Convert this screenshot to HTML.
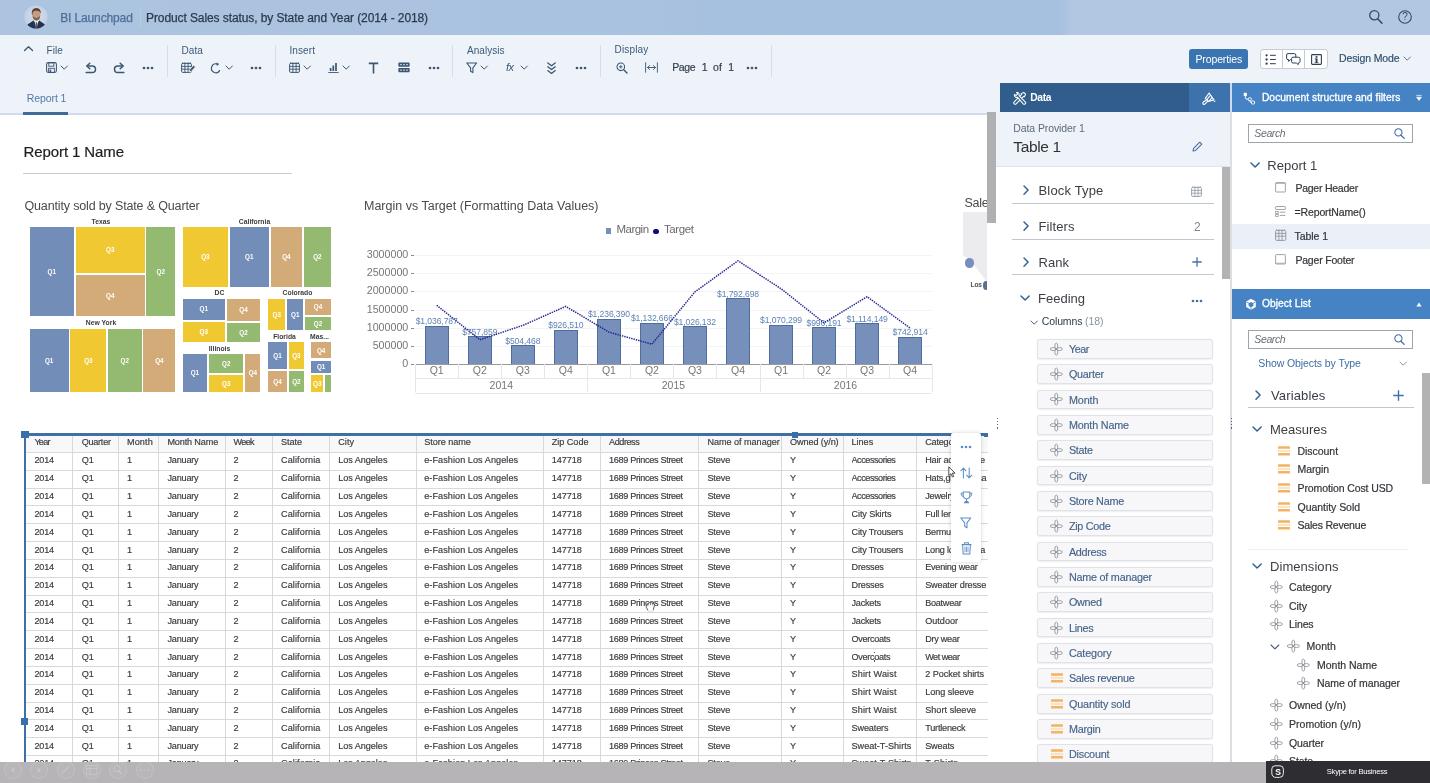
<!DOCTYPE html><html><head><meta charset="utf-8"><title>Product Sales status</title><style>
*{box-sizing:border-box;margin:0;padding:0}
html,body{width:1430px;height:783px;overflow:hidden;background:#fff}
body{font-family:"Liberation Sans",sans-serif;position:relative;color:#32363a}
.a{position:absolute}
.t{position:absolute;white-space:nowrap;line-height:1}
svg{position:absolute;overflow:visible}
</style></head><body><div id="root" style="position:absolute;left:0;top:0;width:1430px;height:783px;overflow:hidden;will-change:transform">
<div class="a" style="left:0px;top:0px;width:1430px;height:34.5px;background:linear-gradient(90deg,#adc4e0 0%,#a9c2df 45%,#a6c0df 50%,#a6c0df 74%,#b2c7e2 75%,#b2c7e2 100%);"></div>
<div class="a" style="left:0px;top:34.5px;width:1430px;height:79px;background:#eef2f9;"></div>
<div class="a" style="left:0px;top:113px;width:998px;height:1.7px;background:#d0dcec;"></div>
<div class="a" style="left:0px;top:114.6px;width:998px;height:648px;background:#fff;"></div>
<svg style="left:23.8px;top:5px" width="24" height="24" viewBox="0 0 24 24">
<defs><clipPath id="av"><circle cx="12" cy="12" r="11.6"/></clipPath>
<radialGradient id="avg" cx="0.5" cy="0.45" r="0.6"><stop offset="0" stop-color="#d6e0ee"/><stop offset="1" stop-color="#bccde4"/></radialGradient></defs>
<circle cx="12" cy="12" r="11.6" fill="url(#avg)"/>
<g clip-path="url(#av)">
<path d="M8.2 9.2 Q7.4 3.4 12.4 3.3 Q17 3.4 16.4 9.4 Q16.2 14.8 12.4 15.4 Q8.6 14.8 8.2 9.2Z" fill="#c99a82"/>
<path d="M7.9 9.4 Q7 3 12.4 2.9 Q17.2 3 16.7 8.6 Q15.8 5.6 13.2 5.9 Q10 5.4 8.9 7.2 Q8.4 8.2 8.4 10.2Z" fill="#5b4434"/>
<path d="M8.7 10.6 Q9.2 12.6 12.4 12.9 Q15.6 12.6 16.1 10.6 Q16.3 15 12.4 15.6 Q8.5 15 8.7 10.6Z" fill="#80604e"/>
<path d="M10.8 11.7 Q12.4 12.6 14 11.7 Q12.4 12.2 10.8 11.7Z" fill="#e8d8d0"/>
<path d="M2.4 24 Q2.2 19.6 5 18.4 L9.6 15.4 L12.4 19 L15.2 15.4 L19.6 18.4 Q22 19.6 21.8 24Z" fill="#26324c"/>
<path d="M10.2 15.2 L12.4 24 L14.6 15.2 L12.4 16.6Z" fill="#e6e9ef"/>
<path d="M11.8 17.2 H13 L13.5 24 H11.3Z" fill="#4a5872"/>
</g></svg>
<div class="t" style="left:60.2px;top:11.50px;font-size:12px;height:12px;color:#4d6f99;letter-spacing:-0.130px;-webkit-text-stroke:0.25px #4d6f99;">BI Launchpad</div>
<div class="a" style="left:139.5px;top:9px;width:1px;height:17px;background:#b9cce3;"></div>
<div class="t" style="left:146px;top:11.50px;font-size:12px;height:12px;color:#2b3b4e;letter-spacing:-0.091px;-webkit-text-stroke:0.25px #2b3b4e;">Product Sales status, by State and Year (2014 - 2018)</div>
<svg style="left:1368px;top:9px;" width="16" height="16" viewBox="0 0 16 16"><circle cx="6.3" cy="6.3" r="4.6" fill="none" stroke="#2f4d6e" stroke-width="1.3"/><path d="M9.6 9.8 L14 14.2" stroke="#2f4d6e" stroke-width="1.6" stroke-linecap="round"/></svg>
<svg style="left:1398px;top:9.7px;" width="14" height="14" viewBox="0 0 14 14"><circle cx="7" cy="7" r="6.3" fill="none" stroke="#2f4d6e" stroke-width="1.1"/></svg>
<div class="t" style="left:1402.2px;top:12.00px;font-size:10px;height:10px;color:#2f4d6e;font-weight:400">?</div>
<svg style="left:23.5px;top:45.8px;" width="9" height="5" viewBox="0 0 9 5"><path d="M0.5 4.5 L4.5 0.7 L8.5 4.5" fill="none" stroke="#3b5672" stroke-width="1.3" stroke-linecap="round" stroke-linejoin="round"/></svg>
<div class="t" style="left:46.5px;top:45.80px;font-size:10px;height:10px;color:#3d5a7a;letter-spacing:0.097px;">File</div>
<svg style="left:46px;top:62px;" width="11" height="11" viewBox="0 0 11 11"><rect x="0.6" y="0.6" width="9.8" height="9.8" rx="1.6" fill="none" stroke="#3b5672" stroke-width="1.05"/><rect x="2.8" y="0.8" width="5" height="3.4" fill="none" stroke="#3b5672" stroke-width="0.9"/><rect x="2.6" y="6.3" width="5.8" height="4" fill="none" stroke="#3b5672" stroke-width="0.9"/><rect x="3.6" y="7.6" width="1.6" height="2.6" fill="#3b5672"/></svg>
<svg style="left:61.39999999999999px;top:66.4px;" width="6.4" height="3.2" viewBox="0 0 6.4 3.2"><path d="M0 0 L3.2 3.2 L6.4 0" fill="none" stroke="#3b5672" stroke-width="1.0" stroke-linecap="round" stroke-linejoin="round"/></svg>
<svg style="left:85px;top:62px;" width="12" height="12" viewBox="0 0 12 12"><path d="M1.2 10.6 H7.2 A3.3 3.3 0 0 0 7.2 4 H2.2" fill="none" stroke="#3b5672" stroke-width="1.5" stroke-linecap="round"/><path d="M4.8 1.2 L1.8 4 L4.8 6.8" fill="none" stroke="#3b5672" stroke-width="1.5" stroke-linecap="round" stroke-linejoin="round"/></svg>
<svg style="left:113px;top:62px;" width="12" height="12" viewBox="0 0 12 12"><path d="M10.8 10.6 H4.8 A3.3 3.3 0 0 1 4.8 4 H9.8" fill="none" stroke="#3b5672" stroke-width="1.5" stroke-linecap="round"/><path d="M7.2 1.2 L10.2 4 L7.2 6.8" fill="none" stroke="#3b5672" stroke-width="1.5" stroke-linecap="round" stroke-linejoin="round"/></svg>
<svg style="left:142.3px;top:66px;" width="12" height="4" viewBox="0 0 12 4"><circle cx="2" cy="2" r="1.35" fill="#3b5672"/><circle cx="6" cy="2" r="1.35" fill="#3b5672"/><circle cx="10" cy="2" r="1.35" fill="#3b5672"/></svg>
<div class="a" style="left:167px;top:45px;width:1px;height:32px;background:#d6deea;"></div>
<div class="t" style="left:181.5px;top:45.80px;font-size:10px;height:10px;color:#3d5a7a;letter-spacing:0.095px;">Data</div>
<svg style="left:180.5px;top:62px;" width="11" height="11" viewBox="0 0 11 11"><rect x="0.6" y="1.4" width="9.8" height="9" rx="1.2" fill="none" stroke="#3b5672" stroke-width="1"/><path d="M0.6 4.4 H10.4 M0.6 7.2 H10.4 M3.9 1.4 V10.4 M7.1 1.4 V10.4 M3.9 0.3 V1.4 M7.1 0.3 V1.4 M1.6 0.3 V1.4 M9.4 0.3 V1.4" stroke="#3b5672" stroke-width="0.9" fill="none"/></svg>
<svg style="left:187.5px;top:64px;" width="8" height="9" viewBox="0 0 8 9"><path d="M1 8 L1.8 5.4 L5.6 1.2 L7.4 2.9 L3.6 7.2 Z" fill="#3b5672" stroke="#eef2f9" stroke-width="0.8"/></svg>
<svg style="left:210px;top:62px;" width="12" height="12" viewBox="0 0 12 12"><path d="M9.6 8.6 A4.4 4.4 0 1 1 7.3 2.1" fill="none" stroke="#3b5672" stroke-width="1.2" stroke-linecap="round"/><path d="M6.4 0.4 L9.2 1.9 L6.9 4.1Z" fill="#3b5672"/></svg>
<svg style="left:226.10000000000002px;top:66.4px;" width="6.4" height="3.2" viewBox="0 0 6.4 3.2"><path d="M0 0 L3.2 3.2 L6.4 0" fill="none" stroke="#3b5672" stroke-width="1.0" stroke-linecap="round" stroke-linejoin="round"/></svg>
<svg style="left:250.3px;top:66px;" width="12" height="4" viewBox="0 0 12 4"><circle cx="2" cy="2" r="1.35" fill="#3b5672"/><circle cx="6" cy="2" r="1.35" fill="#3b5672"/><circle cx="10" cy="2" r="1.35" fill="#3b5672"/></svg>
<div class="a" style="left:274.5px;top:45px;width:1px;height:32px;background:#d6deea;"></div>
<div class="t" style="left:289.5px;top:45.80px;font-size:10px;height:10px;color:#3d5a7a;letter-spacing:0.082px;">Insert</div>
<svg style="left:289px;top:62px;" width="11" height="11" viewBox="0 0 11 11"><rect x="0.6" y="1.4" width="9.8" height="9" rx="1.2" fill="none" stroke="#3b5672" stroke-width="1"/><path d="M0.6 4.4 H10.4 M0.6 7.2 H10.4 M3.9 1.4 V10.4 M7.1 1.4 V10.4 M3.9 0.3 V1.4 M7.1 0.3 V1.4 M1.6 0.3 V1.4 M9.4 0.3 V1.4" stroke="#3b5672" stroke-width="0.9" fill="none"/></svg>
<svg style="left:304.1px;top:66.4px;" width="6.4" height="3.2" viewBox="0 0 6.4 3.2"><path d="M0 0 L3.2 3.2 L6.4 0" fill="none" stroke="#3b5672" stroke-width="1.0" stroke-linecap="round" stroke-linejoin="round"/></svg>
<svg style="left:328px;top:62px;" width="11" height="11" viewBox="0 0 11 11"><path d="M2.6 9 V6 M5.3 9 V3.4 M8 9 V1" stroke="#3b5672" stroke-width="1.7" fill="none"/><path d="M0.3 10.5 H10.6" stroke="#3b5672" stroke-width="0.9"/></svg>
<svg style="left:343.1px;top:66.4px;" width="6.4" height="3.2" viewBox="0 0 6.4 3.2"><path d="M0 0 L3.2 3.2 L6.4 0" fill="none" stroke="#3b5672" stroke-width="1.0" stroke-linecap="round" stroke-linejoin="round"/></svg>
<svg style="left:368px;top:62px;" width="11" height="12" viewBox="0 0 11 12"><path d="M0.8 1.4 H10.2 M5.5 1.4 V11.4" stroke="#3b5672" stroke-width="1.6" fill="none"/></svg>
<svg style="left:398px;top:62px;" width="12" height="11" viewBox="0 0 12 11"><rect x="0.4" y="0.6" width="11.2" height="4.2" rx="0.8" fill="#3b5672"/><rect x="0.4" y="6" width="11.2" height="4.2" rx="0.8" fill="#3b5672"/><path d="M2 2.7 H4 M5 2.7 H7 M8 2.7 H10 M2 8.1 H4 M5 8.1 H7 M8 8.1 H10" stroke="#cfd8e4" stroke-width="1"/></svg>
<svg style="left:427.8px;top:66px;" width="12" height="4" viewBox="0 0 12 4"><circle cx="2" cy="2" r="1.35" fill="#3b5672"/><circle cx="6" cy="2" r="1.35" fill="#3b5672"/><circle cx="10" cy="2" r="1.35" fill="#3b5672"/></svg>
<div class="a" style="left:451.5px;top:45px;width:1px;height:32px;background:#d6deea;"></div>
<div class="t" style="left:467px;top:45.80px;font-size:10px;height:10px;color:#3d5a7a;letter-spacing:0.033px;">Analysis</div>
<svg style="left:466px;top:62px;" width="12" height="12" viewBox="0 0 12 12"><path d="M0.8 1 H10.6 L6.9 5.8 V10.6 L4.6 9.2 V5.8 Z" fill="none" stroke="#3b5672" stroke-width="1.1" stroke-linejoin="round"/></svg>
<svg style="left:481.40000000000003px;top:66.4px;" width="6.4" height="3.2" viewBox="0 0 6.4 3.2"><path d="M0 0 L3.2 3.2 L6.4 0" fill="none" stroke="#3b5672" stroke-width="1.0" stroke-linecap="round" stroke-linejoin="round"/></svg>
<div class="t" style="left:506px;top:62.00px;font-size:11px;height:11px;color:#3b5672;font-style:italic;letter-spacing:-0.6px">fx</div>
<svg style="left:520.5999999999999px;top:66.4px;" width="6.4" height="3.2" viewBox="0 0 6.4 3.2"><path d="M0 0 L3.2 3.2 L6.4 0" fill="none" stroke="#3b5672" stroke-width="1.0" stroke-linecap="round" stroke-linejoin="round"/></svg>
<svg style="left:547px;top:61.5px;" width="9" height="12" viewBox="0 0 9 12"><path d="M0.8 1 L4.5 3.8 L8.2 1 M0.8 4.8 L4.5 7.6 L8.2 4.8 M0.8 8.6 L4.5 11.4 L8.2 8.6" fill="none" stroke="#3b5672" stroke-width="1.3" stroke-linecap="round" stroke-linejoin="round"/></svg>
<svg style="left:575.3px;top:66px;" width="12" height="4" viewBox="0 0 12 4"><circle cx="2" cy="2" r="1.35" fill="#3b5672"/><circle cx="6" cy="2" r="1.35" fill="#3b5672"/><circle cx="10" cy="2" r="1.35" fill="#3b5672"/></svg>
<div class="a" style="left:600px;top:45px;width:1px;height:32px;background:#d6deea;"></div>
<div class="t" style="left:614.5px;top:45.30px;font-size:10px;height:10px;color:#3d5a7a;letter-spacing:0.173px;">Display</div>
<svg style="left:615.5px;top:61.5px;" width="12" height="12" viewBox="0 0 12 12"><circle cx="4.8" cy="4.8" r="3.8" fill="none" stroke="#3b5672" stroke-width="1.05"/><path d="M7.7 7.7 L11 11" stroke="#3b5672" stroke-width="1.4" stroke-linecap="round"/><path d="M3 4.8 H6.6 M4.8 3 V6.6" stroke="#3b5672" stroke-width="0.9"/></svg>
<svg style="left:645px;top:62px;" width="13" height="11" viewBox="0 0 13 11"><path d="M0.6 0.3 V10.7 M12.4 0.3 V10.7" stroke="#3b5672" stroke-width="0.9"/><path d="M2.6 5.5 H10.4 M4.6 3.5 L2.6 5.5 L4.6 7.5 M8.4 3.5 L10.4 5.5 L8.4 7.5" fill="none" stroke="#3b5672" stroke-width="0.95" stroke-linecap="round" stroke-linejoin="round"/></svg>
<div class="t" style="left:672.3px;top:62.05px;font-size:10.5px;height:10.5px;color:#33414f;letter-spacing:-0.430px;-webkit-text-stroke:0.2px #33414f;">Page</div>
<div class="t" style="left:701.8px;top:62.05px;font-size:10.5px;height:10.5px;color:#33414f;-webkit-text-stroke:0.2px #33414f">1</div>
<div class="t" style="left:713px;top:62.05px;font-size:10.5px;height:10.5px;color:#33414f;letter-spacing:0.122px;-webkit-text-stroke:0.2px #33414f;">of</div>
<div class="t" style="left:728.2px;top:62.05px;font-size:10.5px;height:10.5px;color:#33414f;-webkit-text-stroke:0.2px #33414f">1</div>
<svg style="left:745.5px;top:66px;" width="12" height="4" viewBox="0 0 12 4"><circle cx="2" cy="2" r="1.35" fill="#3b5672"/><circle cx="6" cy="2" r="1.35" fill="#3b5672"/><circle cx="10" cy="2" r="1.35" fill="#3b5672"/></svg>
<div class="a" style="left:770.5px;top:45px;width:1px;height:32px;background:#d6deea;"></div>
<div class="a" style="left:1189px;top:49.2px;width:59px;height:20.1px;background:#3a75b2;border-radius:3px"></div>
<div class="t" style="left:1195.5px;top:53.55px;font-size:10.5px;height:10.5px;color:#fff;letter-spacing:-0.135px;">Properties</div>
<div class="a" style="left:1259.5px;top:49.3px;width:68px;height:19.6px;background:#fff;border:1px solid #c3ccd8;border-radius:3px"></div>
<div class="a" style="left:1282px;top:49.8px;width:1px;height:18.6px;background:#c3ccd8;"></div>
<div class="a" style="left:1304.3px;top:49.8px;width:1px;height:18.6px;background:#c3ccd8;"></div>
<svg style="left:1265px;top:53.5px;" width="12" height="11" viewBox="0 0 12 11"><circle cx="1.6" cy="1.3" r="1.15" fill="#2c3f55"/><circle cx="1.6" cy="5.5" r="1.15" fill="#2c3f55"/><circle cx="1.6" cy="9.7" r="1.15" fill="#2c3f55"/><path d="M5 1.3 H10.8 M5 5.5 H10.8 M5 9.7 H10.8" stroke="#2c3f55" stroke-width="1"/></svg>
<svg style="left:1286px;top:53px;" width="15" height="12" viewBox="0 0 15 12"><path d="M2 0.6 H8.4 Q9.8 0.6 9.8 2 V5.2 Q9.8 6.6 8.4 6.6 H4.4 L2.6 8.4 V6.6 H2 Q0.6 6.6 0.6 5.2 V2 Q0.6 0.6 2 0.6Z" fill="#fff" stroke="#2c3f55" stroke-width="1"/><path d="M7 4.2 H12.6 Q14 4.2 14 5.6 V8.6 Q14 10 12.6 10 H12.2 V11.6 L10.4 10 H7 Q5.6 10 5.6 8.6 V5.6 Q5.6 4.2 7 4.2Z" fill="#fff" stroke="#2c3f55" stroke-width="1"/></svg>
<svg style="left:1310.5px;top:54px;" width="11" height="11" viewBox="0 0 11 11"><rect x="0.6" y="0.6" width="9.8" height="9.8" rx="0.8" fill="none" stroke="#2c3f55" stroke-width="1.1"/><rect x="4.6" y="4.4" width="1.9" height="4.2" fill="#2c3f55"/><rect x="4.6" y="2.1" width="1.9" height="1.6" fill="#2c3f55"/><path d="M3.8 4.8 H5 M3.6 8.6 H7.4" stroke="#2c3f55" stroke-width="0.8"/></svg>
<div class="t" style="left:1339px;top:53.05px;font-size:10.5px;height:10.5px;color:#34516f;letter-spacing:-0.124px;-webkit-text-stroke:0.2px #34516f;">Design Mode</div>
<svg style="left:1404.1px;top:57.0px;" width="6.4" height="3.2" viewBox="0 0 6.4 3.2"><path d="M0 0 L3.2 3.2 L6.4 0" fill="none" stroke="#5b7594" stroke-width="1.0" stroke-linecap="round" stroke-linejoin="round"/></svg>
<div class="t" style="left:26.8px;top:92.55px;font-size:10.5px;height:10.5px;color:#527aa8;letter-spacing:-0.096px;">Report 1</div>
<div class="a" style="left:23.1px;top:112.1px;width:45.3px;height:2.5px;background:#3f6a9c;"></div>
<div class="t" style="left:23.5px;top:144.20px;font-size:15px;height:15px;color:#1f1f1f;letter-spacing:-0.093px;-webkit-text-stroke:0.2px #1f1f1f;">Report 1 Name</div>
<div class="a" style="left:23px;top:172.6px;width:269px;height:1px;background:#cdcdd1;"></div>
<div class="t" style="left:24.5px;top:200.35px;font-size:12.5px;height:12.5px;color:#4a4a4a;letter-spacing:-0.154px;">Quantity sold by State &amp; Quarter</div>
<div class="t" style="left:364px;top:200.35px;font-size:12.5px;height:12.5px;color:#4a4a4a;letter-spacing:0.004px;">Margin vs Target (Formatting Data Values)</div>
<div class="t" style="left:61px;top:218.6px;width:80px;text-align:center;font-size:6.8px;height:6.8px;color:#3c3c3c;font-weight:700">Texas</div>
<div class="a" style="left:29.7px;top:227px;width:44.2px;height:89.3px;background:#728db8;"></div>
<div class="t" style="left:29.7px;top:268.8px;width:44.2px;text-align:center;font-size:6.3px;height:6.3px;color:#fff;font-weight:700">Q1</div>
<div class="a" style="left:75.8px;top:227px;width:69.0px;height:45.8px;background:#f0c832;"></div>
<div class="t" style="left:75.8px;top:247.1px;width:69.0px;text-align:center;font-size:6.3px;height:6.3px;color:#fff;font-weight:700">Q3</div>
<div class="a" style="left:75.8px;top:274.6px;width:69.0px;height:41.7px;background:#d3ab78;"></div>
<div class="t" style="left:75.8px;top:292.6px;width:69.0px;text-align:center;font-size:6.3px;height:6.3px;color:#fff;font-weight:700">Q4</div>
<div class="a" style="left:146.2px;top:227px;width:29.1px;height:89.3px;background:#93ba70;"></div>
<div class="t" style="left:146.2px;top:268.8px;width:29.1px;text-align:center;font-size:6.3px;height:6.3px;color:#fff;font-weight:700">Q2</div>
<div class="t" style="left:61px;top:320.0px;width:80px;text-align:center;font-size:6.8px;height:6.8px;color:#3c3c3c;font-weight:700">New York</div>
<div class="a" style="left:29.7px;top:328.6px;width:38.9px;height:63.4px;background:#728db8;"></div>
<div class="t" style="left:29.7px;top:357.5px;width:38.9px;text-align:center;font-size:6.3px;height:6.3px;color:#fff;font-weight:700">Q1</div>
<div class="a" style="left:70.3px;top:328.6px;width:36.2px;height:63.4px;background:#f0c832;"></div>
<div class="t" style="left:70.3px;top:357.5px;width:36.2px;text-align:center;font-size:6.3px;height:6.3px;color:#fff;font-weight:700">Q3</div>
<div class="a" style="left:107.8px;top:328.6px;width:34.0px;height:63.4px;background:#93ba70;"></div>
<div class="t" style="left:107.8px;top:357.5px;width:34.0px;text-align:center;font-size:6.3px;height:6.3px;color:#fff;font-weight:700">Q2</div>
<div class="a" style="left:143.4px;top:328.6px;width:31.9px;height:63.4px;background:#d3ab78;"></div>
<div class="t" style="left:143.4px;top:357.5px;width:31.9px;text-align:center;font-size:6.3px;height:6.3px;color:#fff;font-weight:700">Q4</div>
<div class="t" style="left:214.5px;top:218.6px;width:80px;text-align:center;font-size:6.8px;height:6.8px;color:#3c3c3c;font-weight:700">California</div>
<div class="a" style="left:182.8px;top:227px;width:45.1px;height:59.7px;background:#f0c832;"></div>
<div class="t" style="left:182.8px;top:254.0px;width:45.1px;text-align:center;font-size:6.3px;height:6.3px;color:#fff;font-weight:700">Q3</div>
<div class="a" style="left:229.8px;top:227px;width:38.9px;height:59.7px;background:#728db8;"></div>
<div class="t" style="left:229.8px;top:254.0px;width:38.9px;text-align:center;font-size:6.3px;height:6.3px;color:#fff;font-weight:700">Q1</div>
<div class="a" style="left:270.6px;top:227px;width:31.6px;height:59.7px;background:#d3ab78;"></div>
<div class="t" style="left:270.6px;top:254.0px;width:31.6px;text-align:center;font-size:6.3px;height:6.3px;color:#fff;font-weight:700">Q4</div>
<div class="a" style="left:303.9px;top:227px;width:26.9px;height:59.7px;background:#93ba70;"></div>
<div class="t" style="left:303.9px;top:254.0px;width:26.9px;text-align:center;font-size:6.3px;height:6.3px;color:#fff;font-weight:700">Q2</div>
<div class="t" style="left:179.5px;top:290.4px;width:80px;text-align:center;font-size:6.8px;height:6.8px;color:#3c3c3c;font-weight:700">DC</div>
<div class="a" style="left:182.8px;top:298.8px;width:42.0px;height:20.9px;background:#728db8;"></div>
<div class="t" style="left:182.8px;top:306.4px;width:42.0px;text-align:center;font-size:6.3px;height:6.3px;color:#fff;font-weight:700">Q1</div>
<div class="a" style="left:182.8px;top:321.6px;width:42.0px;height:20.9px;background:#f0c832;"></div>
<div class="t" style="left:182.8px;top:329.2px;width:42.0px;text-align:center;font-size:6.3px;height:6.3px;color:#fff;font-weight:700">Q3</div>
<div class="a" style="left:226.7px;top:298.8px;width:33.7px;height:22.6px;background:#d3ab78;"></div>
<div class="t" style="left:226.7px;top:307.3px;width:33.7px;text-align:center;font-size:6.3px;height:6.3px;color:#fff;font-weight:700">Q4</div>
<div class="a" style="left:226.7px;top:323.3px;width:33.7px;height:19.2px;background:#93ba70;"></div>
<div class="t" style="left:226.7px;top:330.1px;width:33.7px;text-align:center;font-size:6.3px;height:6.3px;color:#fff;font-weight:700">Q2</div>
<div class="t" style="left:179.5px;top:346.0px;width:80px;text-align:center;font-size:6.8px;height:6.8px;color:#3c3c3c;font-weight:700">Illinois</div>
<div class="a" style="left:182.8px;top:353.9px;width:24.2px;height:38.1px;background:#728db8;"></div>
<div class="t" style="left:182.8px;top:370.1px;width:24.2px;text-align:center;font-size:6.3px;height:6.3px;color:#fff;font-weight:700">Q1</div>
<div class="a" style="left:209px;top:353.9px;width:34.4px;height:18.9px;background:#93ba70;"></div>
<div class="t" style="left:209.0px;top:360.5px;width:34.4px;text-align:center;font-size:6.3px;height:6.3px;color:#fff;font-weight:700">Q2</div>
<div class="a" style="left:209px;top:374.8px;width:34.4px;height:17.2px;background:#f0c832;"></div>
<div class="t" style="left:209.0px;top:380.6px;width:34.4px;text-align:center;font-size:6.3px;height:6.3px;color:#fff;font-weight:700">Q3</div>
<div class="a" style="left:245.4px;top:353.9px;width:15.0px;height:38.1px;background:#d3ab78;"></div>
<div class="t" style="left:245.4px;top:370.1px;width:15.0px;text-align:center;font-size:6.3px;height:6.3px;color:#fff;font-weight:700">Q4</div>
<div class="t" style="left:257.5px;top:290.4px;width:80px;text-align:center;font-size:6.8px;height:6.8px;color:#3c3c3c;font-weight:700">Colorado</div>
<div class="a" style="left:268px;top:298.8px;width:17.4px;height:31.1px;background:#f0c832;"></div>
<div class="t" style="left:268.0px;top:311.5px;width:17.4px;text-align:center;font-size:6.3px;height:6.3px;color:#fff;font-weight:700">Q3</div>
<div class="a" style="left:287.1px;top:298.8px;width:16.3px;height:31.1px;background:#728db8;"></div>
<div class="t" style="left:287.1px;top:311.5px;width:16.3px;text-align:center;font-size:6.3px;height:6.3px;color:#fff;font-weight:700">Q1</div>
<div class="a" style="left:305.3px;top:298.8px;width:25.5px;height:16.0px;background:#d3ab78;"></div>
<div class="t" style="left:305.3px;top:304.0px;width:25.5px;text-align:center;font-size:6.3px;height:6.3px;color:#fff;font-weight:700">Q4</div>
<div class="a" style="left:305.3px;top:316.8px;width:25.5px;height:13.1px;background:#93ba70;"></div>
<div class="t" style="left:305.3px;top:320.5px;width:25.5px;text-align:center;font-size:6.3px;height:6.3px;color:#fff;font-weight:700">Q2</div>
<div class="t" style="left:244.5px;top:333.8px;width:80px;text-align:center;font-size:6.8px;height:6.8px;color:#3c3c3c;font-weight:700">Florida</div>
<div class="a" style="left:268px;top:342.3px;width:18.9px;height:26.7px;background:#728db8;"></div>
<div class="t" style="left:268.0px;top:352.8px;width:18.9px;text-align:center;font-size:6.3px;height:6.3px;color:#fff;font-weight:700">Q1</div>
<div class="a" style="left:288.8px;top:342.3px;width:15.1px;height:26.7px;background:#f0c832;"></div>
<div class="t" style="left:288.8px;top:352.8px;width:15.1px;text-align:center;font-size:6.3px;height:6.3px;color:#fff;font-weight:700">Q3</div>
<div class="a" style="left:268px;top:370.9px;width:18.9px;height:21.1px;background:#d3ab78;"></div>
<div class="t" style="left:268.0px;top:378.6px;width:18.9px;text-align:center;font-size:6.3px;height:6.3px;color:#fff;font-weight:700">Q4</div>
<div class="a" style="left:288.8px;top:370.9px;width:15.1px;height:21.1px;background:#93ba70;"></div>
<div class="t" style="left:288.8px;top:378.6px;width:15.1px;text-align:center;font-size:6.3px;height:6.3px;color:#fff;font-weight:700">Q2</div>
<div class="t" style="left:279.5px;top:333.8px;width:80px;text-align:center;font-size:6.8px;height:6.8px;color:#3c3c3c;font-weight:700">Mas...</div>
<div class="a" style="left:311.4px;top:342.3px;width:19.4px;height:16.2px;background:#d3ab78;"></div>
<div class="t" style="left:311.4px;top:347.6px;width:19.4px;text-align:center;font-size:6.3px;height:6.3px;color:#fff;font-weight:700">Q4</div>
<div class="a" style="left:311.4px;top:360.5px;width:19.4px;height:12.4px;background:#728db8;"></div>
<div class="t" style="left:311.4px;top:363.9px;width:19.4px;text-align:center;font-size:6.3px;height:6.3px;color:#fff;font-weight:700">Q1</div>
<div class="a" style="left:311.4px;top:374.8px;width:11.6px;height:17.2px;background:#f0c832;"></div>
<div class="t" style="left:311.4px;top:380.6px;width:11.6px;text-align:center;font-size:6.3px;height:6.3px;color:#fff;font-weight:700">Q3</div>
<div class="a" style="left:324.7px;top:374.8px;width:6.1px;height:17.2px;background:#93ba70;"></div>
<div class="a" style="left:415.2px;top:346.1px;width:516.4000000000001px;height:1px;background:#f3f3f5;"></div>
<div class="a" style="left:415.2px;top:327.8px;width:516.4000000000001px;height:1px;background:#f3f3f5;"></div>
<div class="a" style="left:415.2px;top:309.6px;width:516.4000000000001px;height:1px;background:#f3f3f5;"></div>
<div class="a" style="left:415.2px;top:291.4px;width:516.4000000000001px;height:1px;background:#f3f3f5;"></div>
<div class="a" style="left:415.2px;top:273.1px;width:516.4000000000001px;height:1px;background:#f3f3f5;"></div>
<div class="a" style="left:415.2px;top:254.9px;width:516.4000000000001px;height:1px;background:#f3f3f5;"></div>
<div class="t" style="left:340px;width:68.3px;text-align:right;top:358.3px;font-size:10.7px;height:10.7px;color:#767676">0</div>
<div class="a" style="left:410.5px;top:364.3px;width:3px;height:1px;background:#8a8a8a;"></div>
<div class="t" style="left:340px;width:68.3px;text-align:right;top:340.1px;font-size:10.7px;height:10.7px;color:#767676">500000</div>
<div class="a" style="left:410.5px;top:346.1px;width:3px;height:1px;background:#8a8a8a;"></div>
<div class="t" style="left:340px;width:68.3px;text-align:right;top:321.9px;font-size:10.7px;height:10.7px;color:#767676">1000000</div>
<div class="a" style="left:410.5px;top:327.8px;width:3px;height:1px;background:#8a8a8a;"></div>
<div class="t" style="left:340px;width:68.3px;text-align:right;top:303.6px;font-size:10.7px;height:10.7px;color:#767676">1500000</div>
<div class="a" style="left:410.5px;top:309.6px;width:3px;height:1px;background:#8a8a8a;"></div>
<div class="t" style="left:340px;width:68.3px;text-align:right;top:285.4px;font-size:10.7px;height:10.7px;color:#767676">2000000</div>
<div class="a" style="left:410.5px;top:291.4px;width:3px;height:1px;background:#8a8a8a;"></div>
<div class="t" style="left:340px;width:68.3px;text-align:right;top:267.2px;font-size:10.7px;height:10.7px;color:#767676">2500000</div>
<div class="a" style="left:410.5px;top:273.1px;width:3px;height:1px;background:#8a8a8a;"></div>
<div class="t" style="left:340px;width:68.3px;text-align:right;top:249.0px;font-size:10.7px;height:10.7px;color:#767676">3000000</div>
<div class="a" style="left:410.5px;top:254.9px;width:3px;height:1px;background:#8a8a8a;"></div>
<div class="a" style="left:424.92px;top:325.99px;width:23.6px;height:38.31px;background:#7690bb;border:1px solid #506c9c;border-bottom:none"></div>
<div class="a" style="left:467.95px;top:336.16px;width:23.6px;height:28.14px;background:#7690bb;border:1px solid #506c9c;border-bottom:none"></div>
<div class="a" style="left:510.98px;top:345.4px;width:23.6px;height:18.9px;background:#7690bb;border:1px solid #506c9c;border-bottom:none"></div>
<div class="a" style="left:554.02px;top:330.01px;width:23.6px;height:34.29px;background:#7690bb;border:1px solid #506c9c;border-bottom:none"></div>
<div class="a" style="left:597.05px;top:318.71px;width:23.6px;height:45.59px;background:#7690bb;border:1px solid #506c9c;border-bottom:none"></div>
<div class="a" style="left:640.08px;top:322.5px;width:23.6px;height:41.8px;background:#7690bb;border:1px solid #506c9c;border-bottom:none"></div>
<div class="a" style="left:683.12px;top:326.38px;width:23.6px;height:37.92px;background:#7690bb;border:1px solid #506c9c;border-bottom:none"></div>
<div class="a" style="left:726.15px;top:298.43px;width:23.6px;height:65.87px;background:#7690bb;border:1px solid #506c9c;border-bottom:none"></div>
<div class="a" style="left:769.18px;top:324.77px;width:23.6px;height:39.53px;background:#7690bb;border:1px solid #506c9c;border-bottom:none"></div>
<div class="a" style="left:812.22px;top:327.47px;width:23.6px;height:36.83px;background:#7690bb;border:1px solid #506c9c;border-bottom:none"></div>
<div class="a" style="left:855.25px;top:323.17px;width:23.6px;height:41.13px;background:#7690bb;border:1px solid #506c9c;border-bottom:none"></div>
<div class="a" style="left:898.28px;top:336.71px;width:23.6px;height:27.59px;background:#7690bb;border:1px solid #506c9c;border-bottom:none"></div>
<div class="t" style="left:406.7px;width:60px;text-align:center;top:317.3px;font-size:8.6px;height:9px;color:#5d83b5;letter-spacing:-0.1px;transform:scaleY(1.16)">$1,036,787</div>
<div class="t" style="left:449.8px;width:60px;text-align:center;top:327.5px;font-size:8.6px;height:9px;color:#5d83b5;letter-spacing:-0.1px;transform:scaleY(1.16)">$757,859</div>
<div class="t" style="left:492.8px;width:60px;text-align:center;top:336.7px;font-size:8.6px;height:9px;color:#5d83b5;letter-spacing:-0.1px;transform:scaleY(1.16)">$504,468</div>
<div class="t" style="left:535.8px;width:60px;text-align:center;top:321.3px;font-size:8.6px;height:9px;color:#5d83b5;letter-spacing:-0.1px;transform:scaleY(1.16)">$926,510</div>
<div class="t" style="left:578.9px;width:60px;text-align:center;top:310.0px;font-size:8.6px;height:9px;color:#5d83b5;letter-spacing:-0.1px;transform:scaleY(1.16)">$1,236,390</div>
<div class="t" style="left:621.9px;width:60px;text-align:center;top:313.8px;font-size:8.6px;height:9px;color:#5d83b5;letter-spacing:-0.1px;transform:scaleY(1.16)">$1,132,666</div>
<div class="t" style="left:664.9px;width:60px;text-align:center;top:317.7px;font-size:8.6px;height:9px;color:#5d83b5;letter-spacing:-0.1px;transform:scaleY(1.16)">$1,026,132</div>
<div class="t" style="left:708.0px;width:60px;text-align:center;top:289.7px;font-size:8.6px;height:9px;color:#5d83b5;letter-spacing:-0.1px;transform:scaleY(1.16)">$1,792,698</div>
<div class="t" style="left:751.0px;width:60px;text-align:center;top:316.1px;font-size:8.6px;height:9px;color:#5d83b5;letter-spacing:-0.1px;transform:scaleY(1.16)">$1,070,299</div>
<div class="t" style="left:794.0px;width:60px;text-align:center;top:318.8px;font-size:8.6px;height:9px;color:#5d83b5;letter-spacing:-0.1px;transform:scaleY(1.16)">$996,191</div>
<div class="t" style="left:837.1px;width:60px;text-align:center;top:314.5px;font-size:8.6px;height:9px;color:#5d83b5;letter-spacing:-0.1px;transform:scaleY(1.16)">$1,114,149</div>
<div class="t" style="left:880.1px;width:60px;text-align:center;top:328.0px;font-size:8.6px;height:9px;color:#5d83b5;letter-spacing:-0.1px;transform:scaleY(1.16)">$742,914</div>
<div class="a" style="left:415.2px;top:364.3px;width:516.4000000000001px;height:1.2px;background:#9a9a9a;"></div>
<svg style="left:0;top:0" width="1000" height="400"><polyline points="436.7,305.3 479.8,339.7 522.8,325.4 565.8,306.4 608.9,332.1 651.9,344.2 694.9,291.9 738.0,260.8 781.0,288.7 824.0,322.8 867.1,296.7 910.1,328.1" fill="none" stroke="#23238f" stroke-width="1.5" stroke-dasharray="1.4 1.0"/></svg>
<div class="a" style="left:415.2px;top:364.3px;width:1px;height:14.0px;background:#e7e7ea;"></div>
<div class="a" style="left:458.2px;top:364.3px;width:1px;height:14.0px;background:#e7e7ea;"></div>
<div class="a" style="left:501.3px;top:364.3px;width:1px;height:14.0px;background:#e7e7ea;"></div>
<div class="a" style="left:544.3px;top:364.3px;width:1px;height:14.0px;background:#e7e7ea;"></div>
<div class="a" style="left:587.3px;top:364.3px;width:1px;height:14.0px;background:#e7e7ea;"></div>
<div class="a" style="left:630.4px;top:364.3px;width:1px;height:14.0px;background:#e7e7ea;"></div>
<div class="a" style="left:673.4px;top:364.3px;width:1px;height:14.0px;background:#e7e7ea;"></div>
<div class="a" style="left:716.4px;top:364.3px;width:1px;height:14.0px;background:#e7e7ea;"></div>
<div class="a" style="left:759.5px;top:364.3px;width:1px;height:14.0px;background:#e7e7ea;"></div>
<div class="a" style="left:802.5px;top:364.3px;width:1px;height:14.0px;background:#e7e7ea;"></div>
<div class="a" style="left:845.5px;top:364.3px;width:1px;height:14.0px;background:#e7e7ea;"></div>
<div class="a" style="left:888.6px;top:364.3px;width:1px;height:14.0px;background:#e7e7ea;"></div>
<div class="a" style="left:931.6px;top:364.3px;width:1px;height:14.0px;background:#e7e7ea;"></div>
<div class="a" style="left:415.2px;top:364.3px;width:1px;height:28.19999999999999px;background:#e7e7ea;"></div>
<div class="a" style="left:587.3px;top:364.3px;width:1px;height:28.19999999999999px;background:#e7e7ea;"></div>
<div class="a" style="left:759.5px;top:364.3px;width:1px;height:28.19999999999999px;background:#e7e7ea;"></div>
<div class="a" style="left:931.6px;top:364.3px;width:1px;height:28.19999999999999px;background:#e7e7ea;"></div>
<div class="a" style="left:415.2px;top:378.3px;width:516.4000000000001px;height:1px;background:#e7e7ea;"></div>
<div class="a" style="left:415.2px;top:392.5px;width:516.4000000000001px;height:1px;background:#e7e7ea;"></div>
<div class="t" style="left:416.7px;width:40px;text-align:center;top:365.4px;font-size:10.5px;height:10.5px;color:#767676">Q1</div>
<div class="t" style="left:459.8px;width:40px;text-align:center;top:365.4px;font-size:10.5px;height:10.5px;color:#767676">Q2</div>
<div class="t" style="left:502.8px;width:40px;text-align:center;top:365.4px;font-size:10.5px;height:10.5px;color:#767676">Q3</div>
<div class="t" style="left:545.8px;width:40px;text-align:center;top:365.4px;font-size:10.5px;height:10.5px;color:#767676">Q4</div>
<div class="t" style="left:588.9px;width:40px;text-align:center;top:365.4px;font-size:10.5px;height:10.5px;color:#767676">Q1</div>
<div class="t" style="left:631.9px;width:40px;text-align:center;top:365.4px;font-size:10.5px;height:10.5px;color:#767676">Q2</div>
<div class="t" style="left:674.9px;width:40px;text-align:center;top:365.4px;font-size:10.5px;height:10.5px;color:#767676">Q3</div>
<div class="t" style="left:718.0px;width:40px;text-align:center;top:365.4px;font-size:10.5px;height:10.5px;color:#767676">Q4</div>
<div class="t" style="left:761.0px;width:40px;text-align:center;top:365.4px;font-size:10.5px;height:10.5px;color:#767676">Q1</div>
<div class="t" style="left:804.0px;width:40px;text-align:center;top:365.4px;font-size:10.5px;height:10.5px;color:#767676">Q2</div>
<div class="t" style="left:847.1px;width:40px;text-align:center;top:365.4px;font-size:10.5px;height:10.5px;color:#767676">Q3</div>
<div class="t" style="left:890.1px;width:40px;text-align:center;top:365.4px;font-size:10.5px;height:10.5px;color:#767676">Q4</div>
<div class="t" style="left:481.3px;width:40px;text-align:center;top:379.6px;font-size:10.5px;height:10.5px;color:#767676">2014</div>
<div class="t" style="left:653.4px;width:40px;text-align:center;top:379.6px;font-size:10.5px;height:10.5px;color:#767676">2015</div>
<div class="t" style="left:825.5px;width:40px;text-align:center;top:379.6px;font-size:10.5px;height:10.5px;color:#767676">2016</div>
<div class="a" style="left:606.3px;top:228.3px;width:5.2px;height:5.4px;background:#7690bb;"></div>
<div class="t" style="left:616.5px;top:223.85px;font-size:11.5px;height:11.5px;color:#6a6a6a;letter-spacing:-0.525px;">Margin</div>
<div class="a" style="left:653.3px;top:228.6px;width:5.6px;height:5.6px;border-radius:50%;background:#0a0a82"></div>
<div class="t" style="left:664px;top:223.85px;font-size:11.5px;height:11.5px;color:#6a6a6a;letter-spacing:-0.410px;">Target</div>
<div class="a" style="left:950px;top:190px;width:36.8px;height:120px;overflow:hidden">
<div class="t" style="left:14.5px;top:7.35px;font-size:12.5px;height:12.5px;color:#4a4a4a;letter-spacing:-0.254px;">Sale</div>
<svg style="left:13.2px;top:21.8px" width="30" height="80"><path d="M0 0 H30 V76 L23.6 69.5 L9 50 L0 43 Z" fill="#ececef"/></svg>
<div class="a" style="left:14.7px;top:67.8px;width:9.8px;height:9.8px;border-radius:50%;background:#7690bb"></div>
<div class="t" style="left:20.6px;top:91.80px;font-size:6.6px;height:6.6px;color:#4c4c4c;font-weight:700;letter-spacing:-0.15px">Los</div>
<div class="a" style="left:33px;top:91px;width:6px;height:8.5px;border-radius:50%;background:#5a6f94"></div>
</div>
<div class="a" style="left:987.3px;top:112.3px;width:8.7px;height:111.2px;background:#b0b0b3;"></div>
<div class="a" style="left:0;top:0;width:988px;height:762px;overflow:hidden">
<div class="a" style="left:24.5px;top:435px;width:963.5px;height:17.2px;background:#f8f8fa;"></div>
<div class="a" style="left:24.5px;top:452px;width:963.5px;height:1px;background:#d9d9d9;"></div>
<div class="a" style="left:24.5px;top:470px;width:963.5px;height:1px;background:#d9d9d9;"></div>
<div class="a" style="left:24.5px;top:488px;width:963.5px;height:1px;background:#d9d9d9;"></div>
<div class="a" style="left:24.5px;top:505px;width:963.5px;height:1px;background:#d9d9d9;"></div>
<div class="a" style="left:24.5px;top:523px;width:963.5px;height:1px;background:#d9d9d9;"></div>
<div class="a" style="left:24.5px;top:541px;width:963.5px;height:1px;background:#d9d9d9;"></div>
<div class="a" style="left:24.5px;top:559px;width:963.5px;height:1px;background:#d9d9d9;"></div>
<div class="a" style="left:24.5px;top:577px;width:963.5px;height:1px;background:#d9d9d9;"></div>
<div class="a" style="left:24.5px;top:595px;width:963.5px;height:1px;background:#d9d9d9;"></div>
<div class="a" style="left:24.5px;top:612px;width:963.5px;height:1px;background:#d9d9d9;"></div>
<div class="a" style="left:24.5px;top:630px;width:963.5px;height:1px;background:#d9d9d9;"></div>
<div class="a" style="left:24.5px;top:648px;width:963.5px;height:1px;background:#d9d9d9;"></div>
<div class="a" style="left:24.5px;top:666px;width:963.5px;height:1px;background:#d9d9d9;"></div>
<div class="a" style="left:24.5px;top:684px;width:963.5px;height:1px;background:#d9d9d9;"></div>
<div class="a" style="left:24.5px;top:702px;width:963.5px;height:1px;background:#d9d9d9;"></div>
<div class="a" style="left:24.5px;top:719px;width:963.5px;height:1px;background:#d9d9d9;"></div>
<div class="a" style="left:24.5px;top:737px;width:963.5px;height:1px;background:#d9d9d9;"></div>
<div class="a" style="left:24.5px;top:755px;width:963.5px;height:1px;background:#d9d9d9;"></div>
<div class="a" style="left:24.5px;top:773px;width:963.5px;height:1px;background:#d9d9d9;"></div>
<div class="a" style="left:72px;top:435.0px;width:1px;height:340px;background:#d9d9d9;"></div>
<div class="a" style="left:118px;top:435.0px;width:1px;height:340px;background:#d9d9d9;"></div>
<div class="a" style="left:158px;top:435.0px;width:1px;height:340px;background:#d9d9d9;"></div>
<div class="a" style="left:225px;top:435.0px;width:1px;height:340px;background:#d9d9d9;"></div>
<div class="a" style="left:272px;top:435.0px;width:1px;height:340px;background:#d9d9d9;"></div>
<div class="a" style="left:329px;top:435.0px;width:1px;height:340px;background:#d9d9d9;"></div>
<div class="a" style="left:416px;top:435.0px;width:1px;height:340px;background:#d9d9d9;"></div>
<div class="a" style="left:543px;top:435.0px;width:1px;height:340px;background:#d9d9d9;"></div>
<div class="a" style="left:600px;top:435.0px;width:1px;height:340px;background:#d9d9d9;"></div>
<div class="a" style="left:698px;top:435.0px;width:1px;height:340px;background:#d9d9d9;"></div>
<div class="a" style="left:781px;top:435.0px;width:1px;height:340px;background:#d9d9d9;"></div>
<div class="a" style="left:843px;top:435.0px;width:1px;height:340px;background:#d9d9d9;"></div>
<div class="a" style="left:916px;top:435.0px;width:1px;height:340px;background:#d9d9d9;"></div>
<div class="t" style="left:34.4px;top:437.95px;font-size:9.1px;height:10.1px;width:38.3px;overflow:hidden;color:#3a3d40;-webkit-text-stroke:0.18px #3a3d40;letter-spacing:-0.75px;">Year</div>
<div class="t" style="left:81.7px;top:437.95px;font-size:9.1px;height:10.1px;width:37.2px;overflow:hidden;color:#3a3d40;-webkit-text-stroke:0.18px #3a3d40;letter-spacing:-0.26px;">Quarter</div>
<div class="t" style="left:127.0px;top:437.95px;font-size:9.1px;height:10.1px;width:31.4px;overflow:hidden;color:#3a3d40;-webkit-text-stroke:0.18px #3a3d40;letter-spacing:0.12px;">Month</div>
<div class="t" style="left:167.4px;top:437.95px;font-size:9.1px;height:10.1px;width:58.1px;overflow:hidden;color:#3a3d40;-webkit-text-stroke:0.18px #3a3d40;letter-spacing:-0.14px;">Month Name</div>
<div class="t" style="left:233.4px;top:437.95px;font-size:9.1px;height:10.1px;width:39.3px;overflow:hidden;color:#3a3d40;-webkit-text-stroke:0.18px #3a3d40;letter-spacing:-0.62px;">Week</div>
<div class="t" style="left:281.0px;top:437.95px;font-size:9.1px;height:10.1px;width:48.7px;overflow:hidden;color:#3a3d40;-webkit-text-stroke:0.18px #3a3d40;letter-spacing:-0.05px;">State</div>
<div class="t" style="left:338.2px;top:437.95px;font-size:9.1px;height:10.1px;width:77.9px;overflow:hidden;color:#3a3d40;-webkit-text-stroke:0.18px #3a3d40;letter-spacing:0.08px;">City</div>
<div class="t" style="left:424.2px;top:437.95px;font-size:9.1px;height:10.1px;width:119.2px;overflow:hidden;color:#3a3d40;-webkit-text-stroke:0.18px #3a3d40;letter-spacing:-0.05px;">Store name</div>
<div class="t" style="left:551.8px;top:437.95px;font-size:9.1px;height:10.1px;width:48.5px;overflow:hidden;color:#3a3d40;-webkit-text-stroke:0.18px #3a3d40;letter-spacing:-0.03px;">Zip Code</div>
<div class="t" style="left:609.0px;top:437.95px;font-size:9.1px;height:10.1px;width:89.6px;overflow:hidden;color:#3a3d40;-webkit-text-stroke:0.18px #3a3d40;letter-spacing:-0.43px;">Address</div>
<div class="t" style="left:707.4px;top:437.95px;font-size:9.1px;height:10.1px;width:74.1px;overflow:hidden;color:#3a3d40;-webkit-text-stroke:0.18px #3a3d40;letter-spacing:-0.03px;">Name of manager</div>
<div class="t" style="left:790.0px;top:437.95px;font-size:9.1px;height:10.1px;width:53.4px;overflow:hidden;color:#3a3d40;-webkit-text-stroke:0.18px #3a3d40;letter-spacing:-0.09px;">Owned (y/n)</div>
<div class="t" style="left:851.5px;top:437.95px;font-size:9.1px;height:10.1px;width:65.3px;overflow:hidden;color:#3a3d40;-webkit-text-stroke:0.18px #3a3d40;letter-spacing:-0.01px;">Lines</div>
<div class="t" style="left:925.2px;top:437.95px;font-size:9.1px;height:10.1px;width:62.8px;overflow:hidden;color:#3a3d40;-webkit-text-stroke:0.18px #3a3d40;letter-spacing:-0.2px;">Category</div>
<div class="t" style="left:34.4px;top:456.37px;font-size:9.1px;height:10.1px;width:38.3px;overflow:hidden;color:#3a3d40;-webkit-text-stroke:0.18px #3a3d40;letter-spacing:-0.16px;">2014</div>
<div class="t" style="left:81.7px;top:456.37px;font-size:9.1px;height:10.1px;width:37.2px;overflow:hidden;color:#3a3d40;-webkit-text-stroke:0.18px #3a3d40;letter-spacing:-0.12px;">Q1</div>
<div class="t" style="left:127.0px;top:456.37px;font-size:9.1px;height:10.1px;width:31.4px;overflow:hidden;color:#3a3d40;-webkit-text-stroke:0.18px #3a3d40;">1</div>
<div class="t" style="left:167.4px;top:456.37px;font-size:9.1px;height:10.1px;width:58.1px;overflow:hidden;color:#3a3d40;-webkit-text-stroke:0.18px #3a3d40;letter-spacing:-0.18px;">January</div>
<div class="t" style="left:233.4px;top:456.37px;font-size:9.1px;height:10.1px;width:39.3px;overflow:hidden;color:#3a3d40;-webkit-text-stroke:0.18px #3a3d40;">2</div>
<div class="t" style="left:281.0px;top:456.37px;font-size:9.1px;height:10.1px;width:48.7px;overflow:hidden;color:#3a3d40;-webkit-text-stroke:0.18px #3a3d40;letter-spacing:0.11px;">California</div>
<div class="t" style="left:338.2px;top:456.37px;font-size:9.1px;height:10.1px;width:77.9px;overflow:hidden;color:#3a3d40;-webkit-text-stroke:0.18px #3a3d40;letter-spacing:-0.03px;">Los Angeles</div>
<div class="t" style="left:424.2px;top:456.37px;font-size:9.1px;height:10.1px;width:119.2px;overflow:hidden;color:#3a3d40;-webkit-text-stroke:0.18px #3a3d40;letter-spacing:0.07px;">e-Fashion Los Angeles</div>
<div class="t" style="left:551.8px;top:456.37px;font-size:9.1px;height:10.1px;width:48.5px;overflow:hidden;color:#3a3d40;-webkit-text-stroke:0.18px #3a3d40;letter-spacing:-0.06px;">147718</div>
<div class="t" style="left:609.0px;top:456.37px;font-size:9.1px;height:10.1px;width:89.6px;overflow:hidden;color:#3a3d40;-webkit-text-stroke:0.18px #3a3d40;letter-spacing:-0.32px;">1689 Princes Street</div>
<div class="t" style="left:707.4px;top:456.37px;font-size:9.1px;height:10.1px;width:74.1px;overflow:hidden;color:#3a3d40;-webkit-text-stroke:0.18px #3a3d40;letter-spacing:-0.11px;">Steve</div>
<div class="t" style="left:790.0px;top:456.37px;font-size:9.1px;height:10.1px;width:53.4px;overflow:hidden;color:#3a3d40;-webkit-text-stroke:0.18px #3a3d40;">Y</div>
<div class="t" style="left:851.5px;top:456.37px;font-size:9.1px;height:10.1px;width:65.3px;overflow:hidden;color:#3a3d40;-webkit-text-stroke:0.18px #3a3d40;letter-spacing:-0.46px;">Accessories</div>
<div class="t" style="left:925.2px;top:456.37px;font-size:9.1px;height:10.1px;width:62.8px;overflow:hidden;color:#3a3d40;-webkit-text-stroke:0.18px #3a3d40;letter-spacing:-0.2px;">Hair accessorie</div>
<div class="t" style="left:34.4px;top:474.19px;font-size:9.1px;height:10.1px;width:38.3px;overflow:hidden;color:#3a3d40;-webkit-text-stroke:0.18px #3a3d40;letter-spacing:-0.16px;">2014</div>
<div class="t" style="left:81.7px;top:474.19px;font-size:9.1px;height:10.1px;width:37.2px;overflow:hidden;color:#3a3d40;-webkit-text-stroke:0.18px #3a3d40;letter-spacing:-0.12px;">Q1</div>
<div class="t" style="left:127.0px;top:474.19px;font-size:9.1px;height:10.1px;width:31.4px;overflow:hidden;color:#3a3d40;-webkit-text-stroke:0.18px #3a3d40;">1</div>
<div class="t" style="left:167.4px;top:474.19px;font-size:9.1px;height:10.1px;width:58.1px;overflow:hidden;color:#3a3d40;-webkit-text-stroke:0.18px #3a3d40;letter-spacing:-0.18px;">January</div>
<div class="t" style="left:233.4px;top:474.19px;font-size:9.1px;height:10.1px;width:39.3px;overflow:hidden;color:#3a3d40;-webkit-text-stroke:0.18px #3a3d40;">2</div>
<div class="t" style="left:281.0px;top:474.19px;font-size:9.1px;height:10.1px;width:48.7px;overflow:hidden;color:#3a3d40;-webkit-text-stroke:0.18px #3a3d40;letter-spacing:0.11px;">California</div>
<div class="t" style="left:338.2px;top:474.19px;font-size:9.1px;height:10.1px;width:77.9px;overflow:hidden;color:#3a3d40;-webkit-text-stroke:0.18px #3a3d40;letter-spacing:-0.03px;">Los Angeles</div>
<div class="t" style="left:424.2px;top:474.19px;font-size:9.1px;height:10.1px;width:119.2px;overflow:hidden;color:#3a3d40;-webkit-text-stroke:0.18px #3a3d40;letter-spacing:0.07px;">e-Fashion Los Angeles</div>
<div class="t" style="left:551.8px;top:474.19px;font-size:9.1px;height:10.1px;width:48.5px;overflow:hidden;color:#3a3d40;-webkit-text-stroke:0.18px #3a3d40;letter-spacing:-0.06px;">147718</div>
<div class="t" style="left:609.0px;top:474.19px;font-size:9.1px;height:10.1px;width:89.6px;overflow:hidden;color:#3a3d40;-webkit-text-stroke:0.18px #3a3d40;letter-spacing:-0.32px;">1689 Princes Street</div>
<div class="t" style="left:707.4px;top:474.19px;font-size:9.1px;height:10.1px;width:74.1px;overflow:hidden;color:#3a3d40;-webkit-text-stroke:0.18px #3a3d40;letter-spacing:-0.11px;">Steve</div>
<div class="t" style="left:790.0px;top:474.19px;font-size:9.1px;height:10.1px;width:53.4px;overflow:hidden;color:#3a3d40;-webkit-text-stroke:0.18px #3a3d40;">Y</div>
<div class="t" style="left:851.5px;top:474.19px;font-size:9.1px;height:10.1px;width:65.3px;overflow:hidden;color:#3a3d40;-webkit-text-stroke:0.18px #3a3d40;letter-spacing:-0.46px;">Accessories</div>
<div class="t" style="left:925.2px;top:474.19px;font-size:9.1px;height:10.1px;width:62.8px;overflow:hidden;color:#3a3d40;-webkit-text-stroke:0.18px #3a3d40;letter-spacing:-0.2px;">Hats,gloves,sca</div>
<div class="t" style="left:34.4px;top:492.02px;font-size:9.1px;height:10.1px;width:38.3px;overflow:hidden;color:#3a3d40;-webkit-text-stroke:0.18px #3a3d40;letter-spacing:-0.16px;">2014</div>
<div class="t" style="left:81.7px;top:492.02px;font-size:9.1px;height:10.1px;width:37.2px;overflow:hidden;color:#3a3d40;-webkit-text-stroke:0.18px #3a3d40;letter-spacing:-0.12px;">Q1</div>
<div class="t" style="left:127.0px;top:492.02px;font-size:9.1px;height:10.1px;width:31.4px;overflow:hidden;color:#3a3d40;-webkit-text-stroke:0.18px #3a3d40;">1</div>
<div class="t" style="left:167.4px;top:492.02px;font-size:9.1px;height:10.1px;width:58.1px;overflow:hidden;color:#3a3d40;-webkit-text-stroke:0.18px #3a3d40;letter-spacing:-0.18px;">January</div>
<div class="t" style="left:233.4px;top:492.02px;font-size:9.1px;height:10.1px;width:39.3px;overflow:hidden;color:#3a3d40;-webkit-text-stroke:0.18px #3a3d40;">2</div>
<div class="t" style="left:281.0px;top:492.02px;font-size:9.1px;height:10.1px;width:48.7px;overflow:hidden;color:#3a3d40;-webkit-text-stroke:0.18px #3a3d40;letter-spacing:0.11px;">California</div>
<div class="t" style="left:338.2px;top:492.02px;font-size:9.1px;height:10.1px;width:77.9px;overflow:hidden;color:#3a3d40;-webkit-text-stroke:0.18px #3a3d40;letter-spacing:-0.03px;">Los Angeles</div>
<div class="t" style="left:424.2px;top:492.02px;font-size:9.1px;height:10.1px;width:119.2px;overflow:hidden;color:#3a3d40;-webkit-text-stroke:0.18px #3a3d40;letter-spacing:0.07px;">e-Fashion Los Angeles</div>
<div class="t" style="left:551.8px;top:492.02px;font-size:9.1px;height:10.1px;width:48.5px;overflow:hidden;color:#3a3d40;-webkit-text-stroke:0.18px #3a3d40;letter-spacing:-0.06px;">147718</div>
<div class="t" style="left:609.0px;top:492.02px;font-size:9.1px;height:10.1px;width:89.6px;overflow:hidden;color:#3a3d40;-webkit-text-stroke:0.18px #3a3d40;letter-spacing:-0.32px;">1689 Princes Street</div>
<div class="t" style="left:707.4px;top:492.02px;font-size:9.1px;height:10.1px;width:74.1px;overflow:hidden;color:#3a3d40;-webkit-text-stroke:0.18px #3a3d40;letter-spacing:-0.11px;">Steve</div>
<div class="t" style="left:790.0px;top:492.02px;font-size:9.1px;height:10.1px;width:53.4px;overflow:hidden;color:#3a3d40;-webkit-text-stroke:0.18px #3a3d40;">Y</div>
<div class="t" style="left:851.5px;top:492.02px;font-size:9.1px;height:10.1px;width:65.3px;overflow:hidden;color:#3a3d40;-webkit-text-stroke:0.18px #3a3d40;letter-spacing:-0.46px;">Accessories</div>
<div class="t" style="left:925.2px;top:492.02px;font-size:9.1px;height:10.1px;width:62.8px;overflow:hidden;color:#3a3d40;-webkit-text-stroke:0.18px #3a3d40;letter-spacing:-0.2px;">Jewelry</div>
<div class="t" style="left:34.4px;top:509.85px;font-size:9.1px;height:10.1px;width:38.3px;overflow:hidden;color:#3a3d40;-webkit-text-stroke:0.18px #3a3d40;letter-spacing:-0.16px;">2014</div>
<div class="t" style="left:81.7px;top:509.85px;font-size:9.1px;height:10.1px;width:37.2px;overflow:hidden;color:#3a3d40;-webkit-text-stroke:0.18px #3a3d40;letter-spacing:-0.12px;">Q1</div>
<div class="t" style="left:127.0px;top:509.85px;font-size:9.1px;height:10.1px;width:31.4px;overflow:hidden;color:#3a3d40;-webkit-text-stroke:0.18px #3a3d40;">1</div>
<div class="t" style="left:167.4px;top:509.85px;font-size:9.1px;height:10.1px;width:58.1px;overflow:hidden;color:#3a3d40;-webkit-text-stroke:0.18px #3a3d40;letter-spacing:-0.18px;">January</div>
<div class="t" style="left:233.4px;top:509.85px;font-size:9.1px;height:10.1px;width:39.3px;overflow:hidden;color:#3a3d40;-webkit-text-stroke:0.18px #3a3d40;">2</div>
<div class="t" style="left:281.0px;top:509.85px;font-size:9.1px;height:10.1px;width:48.7px;overflow:hidden;color:#3a3d40;-webkit-text-stroke:0.18px #3a3d40;letter-spacing:0.11px;">California</div>
<div class="t" style="left:338.2px;top:509.85px;font-size:9.1px;height:10.1px;width:77.9px;overflow:hidden;color:#3a3d40;-webkit-text-stroke:0.18px #3a3d40;letter-spacing:-0.03px;">Los Angeles</div>
<div class="t" style="left:424.2px;top:509.85px;font-size:9.1px;height:10.1px;width:119.2px;overflow:hidden;color:#3a3d40;-webkit-text-stroke:0.18px #3a3d40;letter-spacing:0.07px;">e-Fashion Los Angeles</div>
<div class="t" style="left:551.8px;top:509.85px;font-size:9.1px;height:10.1px;width:48.5px;overflow:hidden;color:#3a3d40;-webkit-text-stroke:0.18px #3a3d40;letter-spacing:-0.06px;">147718</div>
<div class="t" style="left:609.0px;top:509.85px;font-size:9.1px;height:10.1px;width:89.6px;overflow:hidden;color:#3a3d40;-webkit-text-stroke:0.18px #3a3d40;letter-spacing:-0.32px;">1689 Princes Street</div>
<div class="t" style="left:707.4px;top:509.85px;font-size:9.1px;height:10.1px;width:74.1px;overflow:hidden;color:#3a3d40;-webkit-text-stroke:0.18px #3a3d40;letter-spacing:-0.11px;">Steve</div>
<div class="t" style="left:790.0px;top:509.85px;font-size:9.1px;height:10.1px;width:53.4px;overflow:hidden;color:#3a3d40;-webkit-text-stroke:0.18px #3a3d40;">Y</div>
<div class="t" style="left:851.5px;top:509.85px;font-size:9.1px;height:10.1px;width:65.3px;overflow:hidden;color:#3a3d40;-webkit-text-stroke:0.18px #3a3d40;letter-spacing:-0.10px;">City Skirts</div>
<div class="t" style="left:925.2px;top:509.85px;font-size:9.1px;height:10.1px;width:62.8px;overflow:hidden;color:#3a3d40;-webkit-text-stroke:0.18px #3a3d40;letter-spacing:-0.2px;">Full length</div>
<div class="t" style="left:34.4px;top:527.69px;font-size:9.1px;height:10.1px;width:38.3px;overflow:hidden;color:#3a3d40;-webkit-text-stroke:0.18px #3a3d40;letter-spacing:-0.16px;">2014</div>
<div class="t" style="left:81.7px;top:527.69px;font-size:9.1px;height:10.1px;width:37.2px;overflow:hidden;color:#3a3d40;-webkit-text-stroke:0.18px #3a3d40;letter-spacing:-0.12px;">Q1</div>
<div class="t" style="left:127.0px;top:527.69px;font-size:9.1px;height:10.1px;width:31.4px;overflow:hidden;color:#3a3d40;-webkit-text-stroke:0.18px #3a3d40;">1</div>
<div class="t" style="left:167.4px;top:527.69px;font-size:9.1px;height:10.1px;width:58.1px;overflow:hidden;color:#3a3d40;-webkit-text-stroke:0.18px #3a3d40;letter-spacing:-0.18px;">January</div>
<div class="t" style="left:233.4px;top:527.69px;font-size:9.1px;height:10.1px;width:39.3px;overflow:hidden;color:#3a3d40;-webkit-text-stroke:0.18px #3a3d40;">2</div>
<div class="t" style="left:281.0px;top:527.69px;font-size:9.1px;height:10.1px;width:48.7px;overflow:hidden;color:#3a3d40;-webkit-text-stroke:0.18px #3a3d40;letter-spacing:0.11px;">California</div>
<div class="t" style="left:338.2px;top:527.69px;font-size:9.1px;height:10.1px;width:77.9px;overflow:hidden;color:#3a3d40;-webkit-text-stroke:0.18px #3a3d40;letter-spacing:-0.03px;">Los Angeles</div>
<div class="t" style="left:424.2px;top:527.69px;font-size:9.1px;height:10.1px;width:119.2px;overflow:hidden;color:#3a3d40;-webkit-text-stroke:0.18px #3a3d40;letter-spacing:0.07px;">e-Fashion Los Angeles</div>
<div class="t" style="left:551.8px;top:527.69px;font-size:9.1px;height:10.1px;width:48.5px;overflow:hidden;color:#3a3d40;-webkit-text-stroke:0.18px #3a3d40;letter-spacing:-0.06px;">147718</div>
<div class="t" style="left:609.0px;top:527.69px;font-size:9.1px;height:10.1px;width:89.6px;overflow:hidden;color:#3a3d40;-webkit-text-stroke:0.18px #3a3d40;letter-spacing:-0.32px;">1689 Princes Street</div>
<div class="t" style="left:707.4px;top:527.69px;font-size:9.1px;height:10.1px;width:74.1px;overflow:hidden;color:#3a3d40;-webkit-text-stroke:0.18px #3a3d40;letter-spacing:-0.11px;">Steve</div>
<div class="t" style="left:790.0px;top:527.69px;font-size:9.1px;height:10.1px;width:53.4px;overflow:hidden;color:#3a3d40;-webkit-text-stroke:0.18px #3a3d40;">Y</div>
<div class="t" style="left:851.5px;top:527.69px;font-size:9.1px;height:10.1px;width:65.3px;overflow:hidden;color:#3a3d40;-webkit-text-stroke:0.18px #3a3d40;letter-spacing:-0.15px;">City Trousers</div>
<div class="t" style="left:925.2px;top:527.69px;font-size:9.1px;height:10.1px;width:62.8px;overflow:hidden;color:#3a3d40;-webkit-text-stroke:0.18px #3a3d40;letter-spacing:-0.2px;">Bermudas</div>
<div class="t" style="left:34.4px;top:545.52px;font-size:9.1px;height:10.1px;width:38.3px;overflow:hidden;color:#3a3d40;-webkit-text-stroke:0.18px #3a3d40;letter-spacing:-0.16px;">2014</div>
<div class="t" style="left:81.7px;top:545.52px;font-size:9.1px;height:10.1px;width:37.2px;overflow:hidden;color:#3a3d40;-webkit-text-stroke:0.18px #3a3d40;letter-spacing:-0.12px;">Q1</div>
<div class="t" style="left:127.0px;top:545.52px;font-size:9.1px;height:10.1px;width:31.4px;overflow:hidden;color:#3a3d40;-webkit-text-stroke:0.18px #3a3d40;">1</div>
<div class="t" style="left:167.4px;top:545.52px;font-size:9.1px;height:10.1px;width:58.1px;overflow:hidden;color:#3a3d40;-webkit-text-stroke:0.18px #3a3d40;letter-spacing:-0.18px;">January</div>
<div class="t" style="left:233.4px;top:545.52px;font-size:9.1px;height:10.1px;width:39.3px;overflow:hidden;color:#3a3d40;-webkit-text-stroke:0.18px #3a3d40;">2</div>
<div class="t" style="left:281.0px;top:545.52px;font-size:9.1px;height:10.1px;width:48.7px;overflow:hidden;color:#3a3d40;-webkit-text-stroke:0.18px #3a3d40;letter-spacing:0.11px;">California</div>
<div class="t" style="left:338.2px;top:545.52px;font-size:9.1px;height:10.1px;width:77.9px;overflow:hidden;color:#3a3d40;-webkit-text-stroke:0.18px #3a3d40;letter-spacing:-0.03px;">Los Angeles</div>
<div class="t" style="left:424.2px;top:545.52px;font-size:9.1px;height:10.1px;width:119.2px;overflow:hidden;color:#3a3d40;-webkit-text-stroke:0.18px #3a3d40;letter-spacing:0.07px;">e-Fashion Los Angeles</div>
<div class="t" style="left:551.8px;top:545.52px;font-size:9.1px;height:10.1px;width:48.5px;overflow:hidden;color:#3a3d40;-webkit-text-stroke:0.18px #3a3d40;letter-spacing:-0.06px;">147718</div>
<div class="t" style="left:609.0px;top:545.52px;font-size:9.1px;height:10.1px;width:89.6px;overflow:hidden;color:#3a3d40;-webkit-text-stroke:0.18px #3a3d40;letter-spacing:-0.32px;">1689 Princes Street</div>
<div class="t" style="left:707.4px;top:545.52px;font-size:9.1px;height:10.1px;width:74.1px;overflow:hidden;color:#3a3d40;-webkit-text-stroke:0.18px #3a3d40;letter-spacing:-0.11px;">Steve</div>
<div class="t" style="left:790.0px;top:545.52px;font-size:9.1px;height:10.1px;width:53.4px;overflow:hidden;color:#3a3d40;-webkit-text-stroke:0.18px #3a3d40;">Y</div>
<div class="t" style="left:851.5px;top:545.52px;font-size:9.1px;height:10.1px;width:65.3px;overflow:hidden;color:#3a3d40;-webkit-text-stroke:0.18px #3a3d40;letter-spacing:-0.15px;">City Trousers</div>
<div class="t" style="left:925.2px;top:545.52px;font-size:9.1px;height:10.1px;width:62.8px;overflow:hidden;color:#3a3d40;-webkit-text-stroke:0.18px #3a3d40;letter-spacing:-0.2px;">Long lounge pa</div>
<div class="t" style="left:34.4px;top:563.35px;font-size:9.1px;height:10.1px;width:38.3px;overflow:hidden;color:#3a3d40;-webkit-text-stroke:0.18px #3a3d40;letter-spacing:-0.16px;">2014</div>
<div class="t" style="left:81.7px;top:563.35px;font-size:9.1px;height:10.1px;width:37.2px;overflow:hidden;color:#3a3d40;-webkit-text-stroke:0.18px #3a3d40;letter-spacing:-0.12px;">Q1</div>
<div class="t" style="left:127.0px;top:563.35px;font-size:9.1px;height:10.1px;width:31.4px;overflow:hidden;color:#3a3d40;-webkit-text-stroke:0.18px #3a3d40;">1</div>
<div class="t" style="left:167.4px;top:563.35px;font-size:9.1px;height:10.1px;width:58.1px;overflow:hidden;color:#3a3d40;-webkit-text-stroke:0.18px #3a3d40;letter-spacing:-0.18px;">January</div>
<div class="t" style="left:233.4px;top:563.35px;font-size:9.1px;height:10.1px;width:39.3px;overflow:hidden;color:#3a3d40;-webkit-text-stroke:0.18px #3a3d40;">2</div>
<div class="t" style="left:281.0px;top:563.35px;font-size:9.1px;height:10.1px;width:48.7px;overflow:hidden;color:#3a3d40;-webkit-text-stroke:0.18px #3a3d40;letter-spacing:0.11px;">California</div>
<div class="t" style="left:338.2px;top:563.35px;font-size:9.1px;height:10.1px;width:77.9px;overflow:hidden;color:#3a3d40;-webkit-text-stroke:0.18px #3a3d40;letter-spacing:-0.03px;">Los Angeles</div>
<div class="t" style="left:424.2px;top:563.35px;font-size:9.1px;height:10.1px;width:119.2px;overflow:hidden;color:#3a3d40;-webkit-text-stroke:0.18px #3a3d40;letter-spacing:0.07px;">e-Fashion Los Angeles</div>
<div class="t" style="left:551.8px;top:563.35px;font-size:9.1px;height:10.1px;width:48.5px;overflow:hidden;color:#3a3d40;-webkit-text-stroke:0.18px #3a3d40;letter-spacing:-0.06px;">147718</div>
<div class="t" style="left:609.0px;top:563.35px;font-size:9.1px;height:10.1px;width:89.6px;overflow:hidden;color:#3a3d40;-webkit-text-stroke:0.18px #3a3d40;letter-spacing:-0.32px;">1689 Princes Street</div>
<div class="t" style="left:707.4px;top:563.35px;font-size:9.1px;height:10.1px;width:74.1px;overflow:hidden;color:#3a3d40;-webkit-text-stroke:0.18px #3a3d40;letter-spacing:-0.11px;">Steve</div>
<div class="t" style="left:790.0px;top:563.35px;font-size:9.1px;height:10.1px;width:53.4px;overflow:hidden;color:#3a3d40;-webkit-text-stroke:0.18px #3a3d40;">Y</div>
<div class="t" style="left:851.5px;top:563.35px;font-size:9.1px;height:10.1px;width:65.3px;overflow:hidden;color:#3a3d40;-webkit-text-stroke:0.18px #3a3d40;letter-spacing:-0.17px;">Dresses</div>
<div class="t" style="left:925.2px;top:563.35px;font-size:9.1px;height:10.1px;width:62.8px;overflow:hidden;color:#3a3d40;-webkit-text-stroke:0.18px #3a3d40;letter-spacing:-0.23px;">Evening wear</div>
<div class="t" style="left:34.4px;top:581.18px;font-size:9.1px;height:10.1px;width:38.3px;overflow:hidden;color:#3a3d40;-webkit-text-stroke:0.18px #3a3d40;letter-spacing:-0.16px;">2014</div>
<div class="t" style="left:81.7px;top:581.18px;font-size:9.1px;height:10.1px;width:37.2px;overflow:hidden;color:#3a3d40;-webkit-text-stroke:0.18px #3a3d40;letter-spacing:-0.12px;">Q1</div>
<div class="t" style="left:127.0px;top:581.18px;font-size:9.1px;height:10.1px;width:31.4px;overflow:hidden;color:#3a3d40;-webkit-text-stroke:0.18px #3a3d40;">1</div>
<div class="t" style="left:167.4px;top:581.18px;font-size:9.1px;height:10.1px;width:58.1px;overflow:hidden;color:#3a3d40;-webkit-text-stroke:0.18px #3a3d40;letter-spacing:-0.18px;">January</div>
<div class="t" style="left:233.4px;top:581.18px;font-size:9.1px;height:10.1px;width:39.3px;overflow:hidden;color:#3a3d40;-webkit-text-stroke:0.18px #3a3d40;">2</div>
<div class="t" style="left:281.0px;top:581.18px;font-size:9.1px;height:10.1px;width:48.7px;overflow:hidden;color:#3a3d40;-webkit-text-stroke:0.18px #3a3d40;letter-spacing:0.11px;">California</div>
<div class="t" style="left:338.2px;top:581.18px;font-size:9.1px;height:10.1px;width:77.9px;overflow:hidden;color:#3a3d40;-webkit-text-stroke:0.18px #3a3d40;letter-spacing:-0.03px;">Los Angeles</div>
<div class="t" style="left:424.2px;top:581.18px;font-size:9.1px;height:10.1px;width:119.2px;overflow:hidden;color:#3a3d40;-webkit-text-stroke:0.18px #3a3d40;letter-spacing:0.07px;">e-Fashion Los Angeles</div>
<div class="t" style="left:551.8px;top:581.18px;font-size:9.1px;height:10.1px;width:48.5px;overflow:hidden;color:#3a3d40;-webkit-text-stroke:0.18px #3a3d40;letter-spacing:-0.06px;">147718</div>
<div class="t" style="left:609.0px;top:581.18px;font-size:9.1px;height:10.1px;width:89.6px;overflow:hidden;color:#3a3d40;-webkit-text-stroke:0.18px #3a3d40;letter-spacing:-0.32px;">1689 Princes Street</div>
<div class="t" style="left:707.4px;top:581.18px;font-size:9.1px;height:10.1px;width:74.1px;overflow:hidden;color:#3a3d40;-webkit-text-stroke:0.18px #3a3d40;letter-spacing:-0.11px;">Steve</div>
<div class="t" style="left:790.0px;top:581.18px;font-size:9.1px;height:10.1px;width:53.4px;overflow:hidden;color:#3a3d40;-webkit-text-stroke:0.18px #3a3d40;">Y</div>
<div class="t" style="left:851.5px;top:581.18px;font-size:9.1px;height:10.1px;width:65.3px;overflow:hidden;color:#3a3d40;-webkit-text-stroke:0.18px #3a3d40;letter-spacing:-0.17px;">Dresses</div>
<div class="t" style="left:925.2px;top:581.18px;font-size:9.1px;height:10.1px;width:62.8px;overflow:hidden;color:#3a3d40;-webkit-text-stroke:0.18px #3a3d40;letter-spacing:-0.16px;">Sweater dresse</div>
<div class="t" style="left:34.4px;top:599.00px;font-size:9.1px;height:10.1px;width:38.3px;overflow:hidden;color:#3a3d40;-webkit-text-stroke:0.18px #3a3d40;letter-spacing:-0.16px;">2014</div>
<div class="t" style="left:81.7px;top:599.00px;font-size:9.1px;height:10.1px;width:37.2px;overflow:hidden;color:#3a3d40;-webkit-text-stroke:0.18px #3a3d40;letter-spacing:-0.12px;">Q1</div>
<div class="t" style="left:127.0px;top:599.00px;font-size:9.1px;height:10.1px;width:31.4px;overflow:hidden;color:#3a3d40;-webkit-text-stroke:0.18px #3a3d40;">1</div>
<div class="t" style="left:167.4px;top:599.00px;font-size:9.1px;height:10.1px;width:58.1px;overflow:hidden;color:#3a3d40;-webkit-text-stroke:0.18px #3a3d40;letter-spacing:-0.18px;">January</div>
<div class="t" style="left:233.4px;top:599.00px;font-size:9.1px;height:10.1px;width:39.3px;overflow:hidden;color:#3a3d40;-webkit-text-stroke:0.18px #3a3d40;">2</div>
<div class="t" style="left:281.0px;top:599.00px;font-size:9.1px;height:10.1px;width:48.7px;overflow:hidden;color:#3a3d40;-webkit-text-stroke:0.18px #3a3d40;letter-spacing:0.11px;">California</div>
<div class="t" style="left:338.2px;top:599.00px;font-size:9.1px;height:10.1px;width:77.9px;overflow:hidden;color:#3a3d40;-webkit-text-stroke:0.18px #3a3d40;letter-spacing:-0.03px;">Los Angeles</div>
<div class="t" style="left:424.2px;top:599.00px;font-size:9.1px;height:10.1px;width:119.2px;overflow:hidden;color:#3a3d40;-webkit-text-stroke:0.18px #3a3d40;letter-spacing:0.07px;">e-Fashion Los Angeles</div>
<div class="t" style="left:551.8px;top:599.00px;font-size:9.1px;height:10.1px;width:48.5px;overflow:hidden;color:#3a3d40;-webkit-text-stroke:0.18px #3a3d40;letter-spacing:-0.06px;">147718</div>
<div class="t" style="left:609.0px;top:599.00px;font-size:9.1px;height:10.1px;width:89.6px;overflow:hidden;color:#3a3d40;-webkit-text-stroke:0.18px #3a3d40;letter-spacing:-0.32px;">1689 Princes Street</div>
<div class="t" style="left:707.4px;top:599.00px;font-size:9.1px;height:10.1px;width:74.1px;overflow:hidden;color:#3a3d40;-webkit-text-stroke:0.18px #3a3d40;letter-spacing:-0.11px;">Steve</div>
<div class="t" style="left:790.0px;top:599.00px;font-size:9.1px;height:10.1px;width:53.4px;overflow:hidden;color:#3a3d40;-webkit-text-stroke:0.18px #3a3d40;">Y</div>
<div class="t" style="left:851.5px;top:599.00px;font-size:9.1px;height:10.1px;width:65.3px;overflow:hidden;color:#3a3d40;-webkit-text-stroke:0.18px #3a3d40;letter-spacing:-0.21px;">Jackets</div>
<div class="t" style="left:925.2px;top:599.00px;font-size:9.1px;height:10.1px;width:62.8px;overflow:hidden;color:#3a3d40;-webkit-text-stroke:0.18px #3a3d40;letter-spacing:-0.26px;">Boatwear</div>
<div class="t" style="left:34.4px;top:616.84px;font-size:9.1px;height:10.1px;width:38.3px;overflow:hidden;color:#3a3d40;-webkit-text-stroke:0.18px #3a3d40;letter-spacing:-0.16px;">2014</div>
<div class="t" style="left:81.7px;top:616.84px;font-size:9.1px;height:10.1px;width:37.2px;overflow:hidden;color:#3a3d40;-webkit-text-stroke:0.18px #3a3d40;letter-spacing:-0.12px;">Q1</div>
<div class="t" style="left:127.0px;top:616.84px;font-size:9.1px;height:10.1px;width:31.4px;overflow:hidden;color:#3a3d40;-webkit-text-stroke:0.18px #3a3d40;">1</div>
<div class="t" style="left:167.4px;top:616.84px;font-size:9.1px;height:10.1px;width:58.1px;overflow:hidden;color:#3a3d40;-webkit-text-stroke:0.18px #3a3d40;letter-spacing:-0.18px;">January</div>
<div class="t" style="left:233.4px;top:616.84px;font-size:9.1px;height:10.1px;width:39.3px;overflow:hidden;color:#3a3d40;-webkit-text-stroke:0.18px #3a3d40;">2</div>
<div class="t" style="left:281.0px;top:616.84px;font-size:9.1px;height:10.1px;width:48.7px;overflow:hidden;color:#3a3d40;-webkit-text-stroke:0.18px #3a3d40;letter-spacing:0.11px;">California</div>
<div class="t" style="left:338.2px;top:616.84px;font-size:9.1px;height:10.1px;width:77.9px;overflow:hidden;color:#3a3d40;-webkit-text-stroke:0.18px #3a3d40;letter-spacing:-0.03px;">Los Angeles</div>
<div class="t" style="left:424.2px;top:616.84px;font-size:9.1px;height:10.1px;width:119.2px;overflow:hidden;color:#3a3d40;-webkit-text-stroke:0.18px #3a3d40;letter-spacing:0.07px;">e-Fashion Los Angeles</div>
<div class="t" style="left:551.8px;top:616.84px;font-size:9.1px;height:10.1px;width:48.5px;overflow:hidden;color:#3a3d40;-webkit-text-stroke:0.18px #3a3d40;letter-spacing:-0.06px;">147718</div>
<div class="t" style="left:609.0px;top:616.84px;font-size:9.1px;height:10.1px;width:89.6px;overflow:hidden;color:#3a3d40;-webkit-text-stroke:0.18px #3a3d40;letter-spacing:-0.32px;">1689 Princes Street</div>
<div class="t" style="left:707.4px;top:616.84px;font-size:9.1px;height:10.1px;width:74.1px;overflow:hidden;color:#3a3d40;-webkit-text-stroke:0.18px #3a3d40;letter-spacing:-0.11px;">Steve</div>
<div class="t" style="left:790.0px;top:616.84px;font-size:9.1px;height:10.1px;width:53.4px;overflow:hidden;color:#3a3d40;-webkit-text-stroke:0.18px #3a3d40;">Y</div>
<div class="t" style="left:851.5px;top:616.84px;font-size:9.1px;height:10.1px;width:65.3px;overflow:hidden;color:#3a3d40;-webkit-text-stroke:0.18px #3a3d40;letter-spacing:-0.21px;">Jackets</div>
<div class="t" style="left:925.2px;top:616.84px;font-size:9.1px;height:10.1px;width:62.8px;overflow:hidden;color:#3a3d40;-webkit-text-stroke:0.18px #3a3d40;letter-spacing:0.00px;">Outdoor</div>
<div class="t" style="left:34.4px;top:634.66px;font-size:9.1px;height:10.1px;width:38.3px;overflow:hidden;color:#3a3d40;-webkit-text-stroke:0.18px #3a3d40;letter-spacing:-0.16px;">2014</div>
<div class="t" style="left:81.7px;top:634.66px;font-size:9.1px;height:10.1px;width:37.2px;overflow:hidden;color:#3a3d40;-webkit-text-stroke:0.18px #3a3d40;letter-spacing:-0.12px;">Q1</div>
<div class="t" style="left:127.0px;top:634.66px;font-size:9.1px;height:10.1px;width:31.4px;overflow:hidden;color:#3a3d40;-webkit-text-stroke:0.18px #3a3d40;">1</div>
<div class="t" style="left:167.4px;top:634.66px;font-size:9.1px;height:10.1px;width:58.1px;overflow:hidden;color:#3a3d40;-webkit-text-stroke:0.18px #3a3d40;letter-spacing:-0.18px;">January</div>
<div class="t" style="left:233.4px;top:634.66px;font-size:9.1px;height:10.1px;width:39.3px;overflow:hidden;color:#3a3d40;-webkit-text-stroke:0.18px #3a3d40;">2</div>
<div class="t" style="left:281.0px;top:634.66px;font-size:9.1px;height:10.1px;width:48.7px;overflow:hidden;color:#3a3d40;-webkit-text-stroke:0.18px #3a3d40;letter-spacing:0.11px;">California</div>
<div class="t" style="left:338.2px;top:634.66px;font-size:9.1px;height:10.1px;width:77.9px;overflow:hidden;color:#3a3d40;-webkit-text-stroke:0.18px #3a3d40;letter-spacing:-0.03px;">Los Angeles</div>
<div class="t" style="left:424.2px;top:634.66px;font-size:9.1px;height:10.1px;width:119.2px;overflow:hidden;color:#3a3d40;-webkit-text-stroke:0.18px #3a3d40;letter-spacing:0.07px;">e-Fashion Los Angeles</div>
<div class="t" style="left:551.8px;top:634.66px;font-size:9.1px;height:10.1px;width:48.5px;overflow:hidden;color:#3a3d40;-webkit-text-stroke:0.18px #3a3d40;letter-spacing:-0.06px;">147718</div>
<div class="t" style="left:609.0px;top:634.66px;font-size:9.1px;height:10.1px;width:89.6px;overflow:hidden;color:#3a3d40;-webkit-text-stroke:0.18px #3a3d40;letter-spacing:-0.32px;">1689 Princes Street</div>
<div class="t" style="left:707.4px;top:634.66px;font-size:9.1px;height:10.1px;width:74.1px;overflow:hidden;color:#3a3d40;-webkit-text-stroke:0.18px #3a3d40;letter-spacing:-0.11px;">Steve</div>
<div class="t" style="left:790.0px;top:634.66px;font-size:9.1px;height:10.1px;width:53.4px;overflow:hidden;color:#3a3d40;-webkit-text-stroke:0.18px #3a3d40;">Y</div>
<div class="t" style="left:851.5px;top:634.66px;font-size:9.1px;height:10.1px;width:65.3px;overflow:hidden;color:#3a3d40;-webkit-text-stroke:0.18px #3a3d40;letter-spacing:-0.30px;">Overcoats</div>
<div class="t" style="left:925.2px;top:634.66px;font-size:9.1px;height:10.1px;width:62.8px;overflow:hidden;color:#3a3d40;-webkit-text-stroke:0.18px #3a3d40;letter-spacing:-0.26px;">Dry wear</div>
<div class="t" style="left:34.4px;top:652.50px;font-size:9.1px;height:10.1px;width:38.3px;overflow:hidden;color:#3a3d40;-webkit-text-stroke:0.18px #3a3d40;letter-spacing:-0.16px;">2014</div>
<div class="t" style="left:81.7px;top:652.50px;font-size:9.1px;height:10.1px;width:37.2px;overflow:hidden;color:#3a3d40;-webkit-text-stroke:0.18px #3a3d40;letter-spacing:-0.12px;">Q1</div>
<div class="t" style="left:127.0px;top:652.50px;font-size:9.1px;height:10.1px;width:31.4px;overflow:hidden;color:#3a3d40;-webkit-text-stroke:0.18px #3a3d40;">1</div>
<div class="t" style="left:167.4px;top:652.50px;font-size:9.1px;height:10.1px;width:58.1px;overflow:hidden;color:#3a3d40;-webkit-text-stroke:0.18px #3a3d40;letter-spacing:-0.18px;">January</div>
<div class="t" style="left:233.4px;top:652.50px;font-size:9.1px;height:10.1px;width:39.3px;overflow:hidden;color:#3a3d40;-webkit-text-stroke:0.18px #3a3d40;">2</div>
<div class="t" style="left:281.0px;top:652.50px;font-size:9.1px;height:10.1px;width:48.7px;overflow:hidden;color:#3a3d40;-webkit-text-stroke:0.18px #3a3d40;letter-spacing:0.11px;">California</div>
<div class="t" style="left:338.2px;top:652.50px;font-size:9.1px;height:10.1px;width:77.9px;overflow:hidden;color:#3a3d40;-webkit-text-stroke:0.18px #3a3d40;letter-spacing:-0.03px;">Los Angeles</div>
<div class="t" style="left:424.2px;top:652.50px;font-size:9.1px;height:10.1px;width:119.2px;overflow:hidden;color:#3a3d40;-webkit-text-stroke:0.18px #3a3d40;letter-spacing:0.07px;">e-Fashion Los Angeles</div>
<div class="t" style="left:551.8px;top:652.50px;font-size:9.1px;height:10.1px;width:48.5px;overflow:hidden;color:#3a3d40;-webkit-text-stroke:0.18px #3a3d40;letter-spacing:-0.06px;">147718</div>
<div class="t" style="left:609.0px;top:652.50px;font-size:9.1px;height:10.1px;width:89.6px;overflow:hidden;color:#3a3d40;-webkit-text-stroke:0.18px #3a3d40;letter-spacing:-0.32px;">1689 Princes Street</div>
<div class="t" style="left:707.4px;top:652.50px;font-size:9.1px;height:10.1px;width:74.1px;overflow:hidden;color:#3a3d40;-webkit-text-stroke:0.18px #3a3d40;letter-spacing:-0.11px;">Steve</div>
<div class="t" style="left:790.0px;top:652.50px;font-size:9.1px;height:10.1px;width:53.4px;overflow:hidden;color:#3a3d40;-webkit-text-stroke:0.18px #3a3d40;">Y</div>
<div class="t" style="left:851.5px;top:652.50px;font-size:9.1px;height:10.1px;width:65.3px;overflow:hidden;color:#3a3d40;-webkit-text-stroke:0.18px #3a3d40;letter-spacing:-0.30px;">Overcoats</div>
<div class="t" style="left:925.2px;top:652.50px;font-size:9.1px;height:10.1px;width:62.8px;overflow:hidden;color:#3a3d40;-webkit-text-stroke:0.18px #3a3d40;letter-spacing:-0.50px;">Wet wear</div>
<div class="t" style="left:34.4px;top:670.33px;font-size:9.1px;height:10.1px;width:38.3px;overflow:hidden;color:#3a3d40;-webkit-text-stroke:0.18px #3a3d40;letter-spacing:-0.16px;">2014</div>
<div class="t" style="left:81.7px;top:670.33px;font-size:9.1px;height:10.1px;width:37.2px;overflow:hidden;color:#3a3d40;-webkit-text-stroke:0.18px #3a3d40;letter-spacing:-0.12px;">Q1</div>
<div class="t" style="left:127.0px;top:670.33px;font-size:9.1px;height:10.1px;width:31.4px;overflow:hidden;color:#3a3d40;-webkit-text-stroke:0.18px #3a3d40;">1</div>
<div class="t" style="left:167.4px;top:670.33px;font-size:9.1px;height:10.1px;width:58.1px;overflow:hidden;color:#3a3d40;-webkit-text-stroke:0.18px #3a3d40;letter-spacing:-0.18px;">January</div>
<div class="t" style="left:233.4px;top:670.33px;font-size:9.1px;height:10.1px;width:39.3px;overflow:hidden;color:#3a3d40;-webkit-text-stroke:0.18px #3a3d40;">2</div>
<div class="t" style="left:281.0px;top:670.33px;font-size:9.1px;height:10.1px;width:48.7px;overflow:hidden;color:#3a3d40;-webkit-text-stroke:0.18px #3a3d40;letter-spacing:0.11px;">California</div>
<div class="t" style="left:338.2px;top:670.33px;font-size:9.1px;height:10.1px;width:77.9px;overflow:hidden;color:#3a3d40;-webkit-text-stroke:0.18px #3a3d40;letter-spacing:-0.03px;">Los Angeles</div>
<div class="t" style="left:424.2px;top:670.33px;font-size:9.1px;height:10.1px;width:119.2px;overflow:hidden;color:#3a3d40;-webkit-text-stroke:0.18px #3a3d40;letter-spacing:0.07px;">e-Fashion Los Angeles</div>
<div class="t" style="left:551.8px;top:670.33px;font-size:9.1px;height:10.1px;width:48.5px;overflow:hidden;color:#3a3d40;-webkit-text-stroke:0.18px #3a3d40;letter-spacing:-0.06px;">147718</div>
<div class="t" style="left:609.0px;top:670.33px;font-size:9.1px;height:10.1px;width:89.6px;overflow:hidden;color:#3a3d40;-webkit-text-stroke:0.18px #3a3d40;letter-spacing:-0.32px;">1689 Princes Street</div>
<div class="t" style="left:707.4px;top:670.33px;font-size:9.1px;height:10.1px;width:74.1px;overflow:hidden;color:#3a3d40;-webkit-text-stroke:0.18px #3a3d40;letter-spacing:-0.11px;">Steve</div>
<div class="t" style="left:790.0px;top:670.33px;font-size:9.1px;height:10.1px;width:53.4px;overflow:hidden;color:#3a3d40;-webkit-text-stroke:0.18px #3a3d40;">Y</div>
<div class="t" style="left:851.5px;top:670.33px;font-size:9.1px;height:10.1px;width:65.3px;overflow:hidden;color:#3a3d40;-webkit-text-stroke:0.18px #3a3d40;letter-spacing:0.13px;">Shirt Waist</div>
<div class="t" style="left:925.2px;top:670.33px;font-size:9.1px;height:10.1px;width:62.8px;overflow:hidden;color:#3a3d40;-webkit-text-stroke:0.18px #3a3d40;letter-spacing:-0.05px;">2 Pocket shirts</div>
<div class="t" style="left:34.4px;top:688.15px;font-size:9.1px;height:10.1px;width:38.3px;overflow:hidden;color:#3a3d40;-webkit-text-stroke:0.18px #3a3d40;letter-spacing:-0.16px;">2014</div>
<div class="t" style="left:81.7px;top:688.15px;font-size:9.1px;height:10.1px;width:37.2px;overflow:hidden;color:#3a3d40;-webkit-text-stroke:0.18px #3a3d40;letter-spacing:-0.12px;">Q1</div>
<div class="t" style="left:127.0px;top:688.15px;font-size:9.1px;height:10.1px;width:31.4px;overflow:hidden;color:#3a3d40;-webkit-text-stroke:0.18px #3a3d40;">1</div>
<div class="t" style="left:167.4px;top:688.15px;font-size:9.1px;height:10.1px;width:58.1px;overflow:hidden;color:#3a3d40;-webkit-text-stroke:0.18px #3a3d40;letter-spacing:-0.18px;">January</div>
<div class="t" style="left:233.4px;top:688.15px;font-size:9.1px;height:10.1px;width:39.3px;overflow:hidden;color:#3a3d40;-webkit-text-stroke:0.18px #3a3d40;">2</div>
<div class="t" style="left:281.0px;top:688.15px;font-size:9.1px;height:10.1px;width:48.7px;overflow:hidden;color:#3a3d40;-webkit-text-stroke:0.18px #3a3d40;letter-spacing:0.11px;">California</div>
<div class="t" style="left:338.2px;top:688.15px;font-size:9.1px;height:10.1px;width:77.9px;overflow:hidden;color:#3a3d40;-webkit-text-stroke:0.18px #3a3d40;letter-spacing:-0.03px;">Los Angeles</div>
<div class="t" style="left:424.2px;top:688.15px;font-size:9.1px;height:10.1px;width:119.2px;overflow:hidden;color:#3a3d40;-webkit-text-stroke:0.18px #3a3d40;letter-spacing:0.07px;">e-Fashion Los Angeles</div>
<div class="t" style="left:551.8px;top:688.15px;font-size:9.1px;height:10.1px;width:48.5px;overflow:hidden;color:#3a3d40;-webkit-text-stroke:0.18px #3a3d40;letter-spacing:-0.06px;">147718</div>
<div class="t" style="left:609.0px;top:688.15px;font-size:9.1px;height:10.1px;width:89.6px;overflow:hidden;color:#3a3d40;-webkit-text-stroke:0.18px #3a3d40;letter-spacing:-0.32px;">1689 Princes Street</div>
<div class="t" style="left:707.4px;top:688.15px;font-size:9.1px;height:10.1px;width:74.1px;overflow:hidden;color:#3a3d40;-webkit-text-stroke:0.18px #3a3d40;letter-spacing:-0.11px;">Steve</div>
<div class="t" style="left:790.0px;top:688.15px;font-size:9.1px;height:10.1px;width:53.4px;overflow:hidden;color:#3a3d40;-webkit-text-stroke:0.18px #3a3d40;">Y</div>
<div class="t" style="left:851.5px;top:688.15px;font-size:9.1px;height:10.1px;width:65.3px;overflow:hidden;color:#3a3d40;-webkit-text-stroke:0.18px #3a3d40;letter-spacing:0.13px;">Shirt Waist</div>
<div class="t" style="left:925.2px;top:688.15px;font-size:9.1px;height:10.1px;width:62.8px;overflow:hidden;color:#3a3d40;-webkit-text-stroke:0.18px #3a3d40;letter-spacing:-0.04px;">Long sleeve</div>
<div class="t" style="left:34.4px;top:705.99px;font-size:9.1px;height:10.1px;width:38.3px;overflow:hidden;color:#3a3d40;-webkit-text-stroke:0.18px #3a3d40;letter-spacing:-0.16px;">2014</div>
<div class="t" style="left:81.7px;top:705.99px;font-size:9.1px;height:10.1px;width:37.2px;overflow:hidden;color:#3a3d40;-webkit-text-stroke:0.18px #3a3d40;letter-spacing:-0.12px;">Q1</div>
<div class="t" style="left:127.0px;top:705.99px;font-size:9.1px;height:10.1px;width:31.4px;overflow:hidden;color:#3a3d40;-webkit-text-stroke:0.18px #3a3d40;">1</div>
<div class="t" style="left:167.4px;top:705.99px;font-size:9.1px;height:10.1px;width:58.1px;overflow:hidden;color:#3a3d40;-webkit-text-stroke:0.18px #3a3d40;letter-spacing:-0.18px;">January</div>
<div class="t" style="left:233.4px;top:705.99px;font-size:9.1px;height:10.1px;width:39.3px;overflow:hidden;color:#3a3d40;-webkit-text-stroke:0.18px #3a3d40;">2</div>
<div class="t" style="left:281.0px;top:705.99px;font-size:9.1px;height:10.1px;width:48.7px;overflow:hidden;color:#3a3d40;-webkit-text-stroke:0.18px #3a3d40;letter-spacing:0.11px;">California</div>
<div class="t" style="left:338.2px;top:705.99px;font-size:9.1px;height:10.1px;width:77.9px;overflow:hidden;color:#3a3d40;-webkit-text-stroke:0.18px #3a3d40;letter-spacing:-0.03px;">Los Angeles</div>
<div class="t" style="left:424.2px;top:705.99px;font-size:9.1px;height:10.1px;width:119.2px;overflow:hidden;color:#3a3d40;-webkit-text-stroke:0.18px #3a3d40;letter-spacing:0.07px;">e-Fashion Los Angeles</div>
<div class="t" style="left:551.8px;top:705.99px;font-size:9.1px;height:10.1px;width:48.5px;overflow:hidden;color:#3a3d40;-webkit-text-stroke:0.18px #3a3d40;letter-spacing:-0.06px;">147718</div>
<div class="t" style="left:609.0px;top:705.99px;font-size:9.1px;height:10.1px;width:89.6px;overflow:hidden;color:#3a3d40;-webkit-text-stroke:0.18px #3a3d40;letter-spacing:-0.32px;">1689 Princes Street</div>
<div class="t" style="left:707.4px;top:705.99px;font-size:9.1px;height:10.1px;width:74.1px;overflow:hidden;color:#3a3d40;-webkit-text-stroke:0.18px #3a3d40;letter-spacing:-0.11px;">Steve</div>
<div class="t" style="left:790.0px;top:705.99px;font-size:9.1px;height:10.1px;width:53.4px;overflow:hidden;color:#3a3d40;-webkit-text-stroke:0.18px #3a3d40;">Y</div>
<div class="t" style="left:851.5px;top:705.99px;font-size:9.1px;height:10.1px;width:65.3px;overflow:hidden;color:#3a3d40;-webkit-text-stroke:0.18px #3a3d40;letter-spacing:0.13px;">Shirt Waist</div>
<div class="t" style="left:925.2px;top:705.99px;font-size:9.1px;height:10.1px;width:62.8px;overflow:hidden;color:#3a3d40;-webkit-text-stroke:0.18px #3a3d40;letter-spacing:0.03px;">Short sleeve</div>
<div class="t" style="left:34.4px;top:723.82px;font-size:9.1px;height:10.1px;width:38.3px;overflow:hidden;color:#3a3d40;-webkit-text-stroke:0.18px #3a3d40;letter-spacing:-0.16px;">2014</div>
<div class="t" style="left:81.7px;top:723.82px;font-size:9.1px;height:10.1px;width:37.2px;overflow:hidden;color:#3a3d40;-webkit-text-stroke:0.18px #3a3d40;letter-spacing:-0.12px;">Q1</div>
<div class="t" style="left:127.0px;top:723.82px;font-size:9.1px;height:10.1px;width:31.4px;overflow:hidden;color:#3a3d40;-webkit-text-stroke:0.18px #3a3d40;">1</div>
<div class="t" style="left:167.4px;top:723.82px;font-size:9.1px;height:10.1px;width:58.1px;overflow:hidden;color:#3a3d40;-webkit-text-stroke:0.18px #3a3d40;letter-spacing:-0.18px;">January</div>
<div class="t" style="left:233.4px;top:723.82px;font-size:9.1px;height:10.1px;width:39.3px;overflow:hidden;color:#3a3d40;-webkit-text-stroke:0.18px #3a3d40;">2</div>
<div class="t" style="left:281.0px;top:723.82px;font-size:9.1px;height:10.1px;width:48.7px;overflow:hidden;color:#3a3d40;-webkit-text-stroke:0.18px #3a3d40;letter-spacing:0.11px;">California</div>
<div class="t" style="left:338.2px;top:723.82px;font-size:9.1px;height:10.1px;width:77.9px;overflow:hidden;color:#3a3d40;-webkit-text-stroke:0.18px #3a3d40;letter-spacing:-0.03px;">Los Angeles</div>
<div class="t" style="left:424.2px;top:723.82px;font-size:9.1px;height:10.1px;width:119.2px;overflow:hidden;color:#3a3d40;-webkit-text-stroke:0.18px #3a3d40;letter-spacing:0.07px;">e-Fashion Los Angeles</div>
<div class="t" style="left:551.8px;top:723.82px;font-size:9.1px;height:10.1px;width:48.5px;overflow:hidden;color:#3a3d40;-webkit-text-stroke:0.18px #3a3d40;letter-spacing:-0.06px;">147718</div>
<div class="t" style="left:609.0px;top:723.82px;font-size:9.1px;height:10.1px;width:89.6px;overflow:hidden;color:#3a3d40;-webkit-text-stroke:0.18px #3a3d40;letter-spacing:-0.32px;">1689 Princes Street</div>
<div class="t" style="left:707.4px;top:723.82px;font-size:9.1px;height:10.1px;width:74.1px;overflow:hidden;color:#3a3d40;-webkit-text-stroke:0.18px #3a3d40;letter-spacing:-0.11px;">Steve</div>
<div class="t" style="left:790.0px;top:723.82px;font-size:9.1px;height:10.1px;width:53.4px;overflow:hidden;color:#3a3d40;-webkit-text-stroke:0.18px #3a3d40;">Y</div>
<div class="t" style="left:851.5px;top:723.82px;font-size:9.1px;height:10.1px;width:65.3px;overflow:hidden;color:#3a3d40;-webkit-text-stroke:0.18px #3a3d40;letter-spacing:-0.12px;">Sweaters</div>
<div class="t" style="left:925.2px;top:723.82px;font-size:9.1px;height:10.1px;width:62.8px;overflow:hidden;color:#3a3d40;-webkit-text-stroke:0.18px #3a3d40;letter-spacing:-0.19px;">Turtleneck</div>
<div class="t" style="left:34.4px;top:741.64px;font-size:9.1px;height:10.1px;width:38.3px;overflow:hidden;color:#3a3d40;-webkit-text-stroke:0.18px #3a3d40;letter-spacing:-0.16px;">2014</div>
<div class="t" style="left:81.7px;top:741.64px;font-size:9.1px;height:10.1px;width:37.2px;overflow:hidden;color:#3a3d40;-webkit-text-stroke:0.18px #3a3d40;letter-spacing:-0.12px;">Q1</div>
<div class="t" style="left:127.0px;top:741.64px;font-size:9.1px;height:10.1px;width:31.4px;overflow:hidden;color:#3a3d40;-webkit-text-stroke:0.18px #3a3d40;">1</div>
<div class="t" style="left:167.4px;top:741.64px;font-size:9.1px;height:10.1px;width:58.1px;overflow:hidden;color:#3a3d40;-webkit-text-stroke:0.18px #3a3d40;letter-spacing:-0.18px;">January</div>
<div class="t" style="left:233.4px;top:741.64px;font-size:9.1px;height:10.1px;width:39.3px;overflow:hidden;color:#3a3d40;-webkit-text-stroke:0.18px #3a3d40;">2</div>
<div class="t" style="left:281.0px;top:741.64px;font-size:9.1px;height:10.1px;width:48.7px;overflow:hidden;color:#3a3d40;-webkit-text-stroke:0.18px #3a3d40;letter-spacing:0.11px;">California</div>
<div class="t" style="left:338.2px;top:741.64px;font-size:9.1px;height:10.1px;width:77.9px;overflow:hidden;color:#3a3d40;-webkit-text-stroke:0.18px #3a3d40;letter-spacing:-0.03px;">Los Angeles</div>
<div class="t" style="left:424.2px;top:741.64px;font-size:9.1px;height:10.1px;width:119.2px;overflow:hidden;color:#3a3d40;-webkit-text-stroke:0.18px #3a3d40;letter-spacing:0.07px;">e-Fashion Los Angeles</div>
<div class="t" style="left:551.8px;top:741.64px;font-size:9.1px;height:10.1px;width:48.5px;overflow:hidden;color:#3a3d40;-webkit-text-stroke:0.18px #3a3d40;letter-spacing:-0.06px;">147718</div>
<div class="t" style="left:609.0px;top:741.64px;font-size:9.1px;height:10.1px;width:89.6px;overflow:hidden;color:#3a3d40;-webkit-text-stroke:0.18px #3a3d40;letter-spacing:-0.32px;">1689 Princes Street</div>
<div class="t" style="left:707.4px;top:741.64px;font-size:9.1px;height:10.1px;width:74.1px;overflow:hidden;color:#3a3d40;-webkit-text-stroke:0.18px #3a3d40;letter-spacing:-0.11px;">Steve</div>
<div class="t" style="left:790.0px;top:741.64px;font-size:9.1px;height:10.1px;width:53.4px;overflow:hidden;color:#3a3d40;-webkit-text-stroke:0.18px #3a3d40;">Y</div>
<div class="t" style="left:851.5px;top:741.64px;font-size:9.1px;height:10.1px;width:65.3px;overflow:hidden;color:#3a3d40;-webkit-text-stroke:0.18px #3a3d40;letter-spacing:0.01px;">Sweat-T-Shirts</div>
<div class="t" style="left:925.2px;top:741.64px;font-size:9.1px;height:10.1px;width:62.8px;overflow:hidden;color:#3a3d40;-webkit-text-stroke:0.18px #3a3d40;letter-spacing:-0.14px;">Sweats</div>
<div class="t" style="left:34.4px;top:759.48px;font-size:9.1px;height:10.1px;width:38.3px;overflow:hidden;color:#3a3d40;-webkit-text-stroke:0.18px #3a3d40;letter-spacing:-0.16px;">2014</div>
<div class="t" style="left:81.7px;top:759.48px;font-size:9.1px;height:10.1px;width:37.2px;overflow:hidden;color:#3a3d40;-webkit-text-stroke:0.18px #3a3d40;letter-spacing:-0.12px;">Q1</div>
<div class="t" style="left:127.0px;top:759.48px;font-size:9.1px;height:10.1px;width:31.4px;overflow:hidden;color:#3a3d40;-webkit-text-stroke:0.18px #3a3d40;">1</div>
<div class="t" style="left:167.4px;top:759.48px;font-size:9.1px;height:10.1px;width:58.1px;overflow:hidden;color:#3a3d40;-webkit-text-stroke:0.18px #3a3d40;letter-spacing:-0.18px;">January</div>
<div class="t" style="left:233.4px;top:759.48px;font-size:9.1px;height:10.1px;width:39.3px;overflow:hidden;color:#3a3d40;-webkit-text-stroke:0.18px #3a3d40;">2</div>
<div class="t" style="left:281.0px;top:759.48px;font-size:9.1px;height:10.1px;width:48.7px;overflow:hidden;color:#3a3d40;-webkit-text-stroke:0.18px #3a3d40;letter-spacing:0.11px;">California</div>
<div class="t" style="left:338.2px;top:759.48px;font-size:9.1px;height:10.1px;width:77.9px;overflow:hidden;color:#3a3d40;-webkit-text-stroke:0.18px #3a3d40;letter-spacing:-0.03px;">Los Angeles</div>
<div class="t" style="left:424.2px;top:759.48px;font-size:9.1px;height:10.1px;width:119.2px;overflow:hidden;color:#3a3d40;-webkit-text-stroke:0.18px #3a3d40;letter-spacing:0.07px;">e-Fashion Los Angeles</div>
<div class="t" style="left:551.8px;top:759.48px;font-size:9.1px;height:10.1px;width:48.5px;overflow:hidden;color:#3a3d40;-webkit-text-stroke:0.18px #3a3d40;letter-spacing:-0.06px;">147718</div>
<div class="t" style="left:609.0px;top:759.48px;font-size:9.1px;height:10.1px;width:89.6px;overflow:hidden;color:#3a3d40;-webkit-text-stroke:0.18px #3a3d40;letter-spacing:-0.32px;">1689 Princes Street</div>
<div class="t" style="left:707.4px;top:759.48px;font-size:9.1px;height:10.1px;width:74.1px;overflow:hidden;color:#3a3d40;-webkit-text-stroke:0.18px #3a3d40;letter-spacing:-0.11px;">Steve</div>
<div class="t" style="left:790.0px;top:759.48px;font-size:9.1px;height:10.1px;width:53.4px;overflow:hidden;color:#3a3d40;-webkit-text-stroke:0.18px #3a3d40;">Y</div>
<div class="t" style="left:851.5px;top:759.48px;font-size:9.1px;height:10.1px;width:65.3px;overflow:hidden;color:#3a3d40;-webkit-text-stroke:0.18px #3a3d40;letter-spacing:0.01px;">Sweat-T-Shirts</div>
<div class="t" style="left:925.2px;top:759.48px;font-size:9.1px;height:10.1px;width:62.8px;overflow:hidden;color:#3a3d40;-webkit-text-stroke:0.18px #3a3d40;letter-spacing:0.21px;">T-Shirts</div>
</div>
<div class="a" style="left:23.4px;top:433.3px;width:964.7px;height:2.7px;background:#426fa3;"></div>
<div class="a" style="left:23.5px;top:433.5px;width:2.0px;height:329px;background:#426fa3;"></div>
<div class="a" style="left:21px;top:431.4px;width:7.6px;height:6.5px;background:#3b6fa9;"></div>
<div class="a" style="left:791.5px;top:431.8px;width:6.5px;height:6.5px;background:#3b6fa9;"></div>
<div class="a" style="left:21px;top:718.2px;width:7px;height:7px;background:#3b6fa9;"></div>
<div class="a" style="left:984px;top:432.6px;width:4px;height:4px;background:#3b6fa9;"></div>
<div class="a" style="left:951px;top:433px;width:30.4px;height:128.6px;background:#fff;box-shadow:0 0 4px rgba(0,0,0,0.18);border-radius:2px"></div>
<svg style="left:960px;top:445px;" width="12" height="4" viewBox="0 0 12 4"><circle cx="2" cy="2" r="1.3" fill="#5b8ec6"/><circle cx="6" cy="2" r="1.3" fill="#5b8ec6"/><circle cx="10" cy="2" r="1.3" fill="#5b8ec6"/></svg>
<svg style="left:960px;top:467px;" width="13" height="12" viewBox="0 0 13 12"><path d="M3.4 11 V1.2 M0.8 3.8 L3.4 1.2 L6 3.8 M9.2 1 V10.8 M6.6 8.2 L9.2 10.8 L11.8 8.2" fill="none" stroke="#5b8ec6" stroke-width="1.05" stroke-linecap="round" stroke-linejoin="round"/></svg>
<svg style="left:960px;top:491px;" width="13" height="13" viewBox="0 0 13 13"><path d="M3.2 1 H9.8 V4.6 A3.3 3.3 0 0 1 3.2 4.6 Z" fill="none" stroke="#5b8ec6" stroke-width="1.05"/><path d="M3.2 2.2 H1 Q1 5.4 3.6 5.8 M9.8 2.2 H12 Q12 5.4 9.4 5.8" fill="none" stroke="#5b8ec6" stroke-width="0.95"/><path d="M6.5 8 V10.4 M4 11.6 H9 M4.8 10.4 H8.2" stroke="#5b8ec6" stroke-width="1.05" fill="none"/></svg>
<svg style="left:960px;top:517px;" width="12" height="12" viewBox="0 0 12 12"><path d="M0.8 1 H10.8 L7 5.8 V10.8 L4.7 9.3 V5.8 Z" fill="none" stroke="#5b8ec6" stroke-width="1.05" stroke-linejoin="round"/></svg>
<svg style="left:960.5px;top:542px;" width="11" height="13" viewBox="0 0 11 13"><path d="M0.6 2.6 H10.4 M3.6 2.4 V0.8 H7.4 V2.4" fill="none" stroke="#5b8ec6" stroke-width="1.05"/><path d="M1.6 2.8 L2.2 12 H8.8 L9.4 2.8" fill="none" stroke="#5b8ec6" stroke-width="1.05"/><path d="M4 4.6 V10.2 M5.5 4.6 V10.2 M7 4.6 V10.2" stroke="#5b8ec6" stroke-width="0.8"/></svg>
<svg style="left:947.5px;top:465.5px;" width="8" height="12" viewBox="0 0 8 12"><path d="M0.8 0.8 V9.6 L2.9 7.7 L4.4 11 L5.7 10.4 L4.3 7.2 H7 Z" fill="#fff" stroke="#222" stroke-width="0.8"/></svg>
<svg style="left:645px;top:600.8px;" width="11" height="11" viewBox="0 0 11 11"><path d="M2.2 4.4 Q1.8 2 3.3 2.6 Q4.2 0.8 5.6 2.2 Q6.8 0.8 7.8 2.4 Q9.8 1.8 9.6 4.4 L8.4 8 L7.6 10.4 H3.8 L1.4 6.6 Q0.6 5 2.2 4.4Z" fill="#fff" stroke="#333" stroke-width="0.8" stroke-linejoin="round"/><path d="M3.3 2.8 V4.4 M5.6 2.4 V4.2 M7.8 2.6 V4.4" stroke="#333" stroke-width="0.6"/><rect x="3.2" y="8.6" width="5" height="2.2" fill="#fff"/></svg>
<div class="a" style="left:874.4px;top:652px;width:1px;height:1.2px;background:#555;"></div>
<div class="a" style="left:874.4px;top:660.4px;width:1px;height:1.2px;background:#555;"></div>
<div class="a" style="left:996px;top:112px;width:434px;height:650px;background:#fff;"></div>
<div class="a" style="left:1229.8px;top:83px;width:2.5px;height:29px;background:#cfdcee;"></div>
<div class="a" style="left:1230.2px;top:112px;width:1.7px;height:650px;background:#dddee3;"></div>
<div class="a" style="left:999.5px;top:83px;width:190px;height:29px;background:#305d8c;"></div>
<div class="a" style="left:1188.8px;top:83px;width:41px;height:29px;background:#3e72ad;"></div>
<svg style="left:1012.6px;top:91.9px;" width="13.4" height="13" viewBox="0 0 13.4 13"><g fill="#305d8c" stroke="#fff" stroke-width="1.05" stroke-linejoin="round"><path d="M1.2 9.8 L8.6 2.4 L8.2 1.6 L10.8 0.4 L12.6 2.2 L11.4 4.8 L10.6 4.4 L3.2 11.8 Q2.2 12.8 1.2 11.8 Q0.2 10.8 1.2 9.8Z"/><path d="M12.2 9.8 L6 3.6 Q6.6 1.4 4.8 0.6 L3.6 0.4 L4.6 2 L3.2 3.4 L1.4 2.6 Q1.2 4.4 2.6 5.2 Q3.6 5.6 4.4 5.2 L10.2 11.8 Q11.2 12.8 12.2 11.8 Q13.2 10.8 12.2 9.8Z"/></g></svg>
<div class="t" style="left:1030.2px;top:93.15px;font-size:10.3px;height:10.3px;color:#fff;letter-spacing:-0.331px;font-weight:700;">Data</div>
<svg style="left:1202px;top:91.5px;" width="14" height="13.5" viewBox="0 0 14 13.5"><g fill="none" stroke="#fff" stroke-width="1.1" stroke-linejoin="round" stroke-linecap="round"><path d="M7.1 1 L11.9 7.9 L6.4 9.4 L3.3 6.4 Z"/><path d="M8.3 3.4 L4.9 7.6 M10 5.6 L7 9"/><path d="M4.4 8 L1.4 10 Q0.2 11.2 1.2 12.2 Q2.2 12.8 3.2 11.8 L5.8 9.2"/></g><circle cx="12.6" cy="9.3" r="0.8" fill="#fff"/></svg>
<div class="a" style="left:996px;top:112px;width:233.8px;height:53.5px;background:#eef2f9;"></div>
<div class="a" style="left:996px;top:165.5px;width:233.8px;height:1px;background:#dbe4f0;"></div>
<div class="t" style="left:1013.3px;top:122.75px;font-size:10.5px;height:10.5px;color:#5d6b7a;letter-spacing:-0.096px;">Data Provider 1</div>
<div class="t" style="left:1013.3px;top:138.85px;font-size:15.5px;height:15.5px;color:#2f3337;letter-spacing:-0.354px;">Table 1</div>
<svg style="left:1192px;top:140.5px;" width="11" height="11" viewBox="0 0 11 11"><path d="M1 10 L1.6 7.4 L7.8 1.2 L9.8 3.2 L3.6 9.4 Z" fill="none" stroke="#3e6fa6" stroke-width="1.05" stroke-linejoin="round"/></svg>
<div class="a" style="left:1221.6px;top:166.5px;width:8px;height:112px;background:#b3b3b3;"></div>
<svg style="left:1024.15px;top:186.1px;" width="4.1" height="8.2" viewBox="0 0 4.1 8.2"><path d="M0 0 L4.1 4.1 L0 8.2" fill="none" stroke="#34608f" stroke-width="1.45" stroke-linecap="round" stroke-linejoin="round"/></svg>
<div class="t" style="left:1038.5px;top:184.30px;font-size:13px;height:13px;color:#3a3f45;letter-spacing:0.165px;">Block Type</div>
<svg style="left:1191px;top:185.5px;" width="11" height="11" viewBox="0 0 11 11"><rect x="0.6" y="1.4" width="9.8" height="9" rx="1.2" fill="none" stroke="#9aa3ad" stroke-width="1"/><path d="M0.6 4.4 H10.4 M0.6 7.2 H10.4 M3.9 1.4 V10.4 M7.1 1.4 V10.4 M3.9 0.3 V1.4 M7.1 0.3 V1.4 M1.6 0.3 V1.4 M9.4 0.3 V1.4" stroke="#9aa3ad" stroke-width="0.9" fill="none"/></svg>
<div class="a" style="left:1012.4px;top:202.8px;width:202px;height:1.2px;background:#c3c6cb;"></div>
<svg style="left:1024.15px;top:221.9px;" width="4.1" height="8.2" viewBox="0 0 4.1 8.2"><path d="M0 0 L4.1 4.1 L0 8.2" fill="none" stroke="#34608f" stroke-width="1.45" stroke-linecap="round" stroke-linejoin="round"/></svg>
<div class="t" style="left:1038.5px;top:220.10px;font-size:13px;height:13px;color:#3a3f45;letter-spacing:0.088px;">Filters</div>
<div class="t" style="left:1194px;top:220.80px;font-size:12px;height:12px;color:#7a8593;">2</div>
<div class="a" style="left:1012.4px;top:238.8px;width:202px;height:1.2px;background:#c3c6cb;"></div>
<svg style="left:1024.15px;top:257.7px;" width="4.1" height="8.2" viewBox="0 0 4.1 8.2"><path d="M0 0 L4.1 4.1 L0 8.2" fill="none" stroke="#34608f" stroke-width="1.45" stroke-linecap="round" stroke-linejoin="round"/></svg>
<div class="t" style="left:1038.5px;top:255.90px;font-size:13px;height:13px;color:#3a3f45;letter-spacing:0.038px;">Rank</div>
<svg style="left:1192px;top:257px;" width="10" height="10" viewBox="0 0 10 10"><path d="M5 0.3 V9.7 M0.3 5 H9.7" stroke="#3f72ab" stroke-width="1.3"/></svg>
<div class="a" style="left:1012.4px;top:273.8px;width:202px;height:1.2px;background:#c3c6cb;"></div>
<svg style="left:1021.4px;top:295.55px;" width="8.2" height="4.1" viewBox="0 0 8.2 4.1"><path d="M0 0 L4.1 4.1 L8.2 0" fill="none" stroke="#34608f" stroke-width="1.45" stroke-linecap="round" stroke-linejoin="round"/></svg>
<div class="t" style="left:1038px;top:291.50px;font-size:13px;height:13px;color:#3a3f45;letter-spacing:0.004px;">Feeding</div>
<svg style="left:1191.3px;top:298.6px;" width="12" height="4" viewBox="0 0 12 4"><circle cx="2" cy="2" r="1.35" fill="#47709e"/><circle cx="6" cy="2" r="1.35" fill="#47709e"/><circle cx="10" cy="2" r="1.35" fill="#47709e"/></svg>
<svg style="left:1030.8px;top:320.59999999999997px;" width="6.4" height="3.2" viewBox="0 0 6.4 3.2"><path d="M0 0 L3.2 3.2 L6.4 0" fill="none" stroke="#47607e" stroke-width="1.0" stroke-linecap="round" stroke-linejoin="round"/></svg>
<div class="t" style="left:1041.8px;top:316.05px;font-size:10.5px;height:10.5px;color:#2f3b48;letter-spacing:-0.133px;">Columns</div>
<div class="t" style="left:1085px;top:316.05px;font-size:10.5px;height:10.5px;color:#8a939e;letter-spacing:-0.043px;">(18)</div>
<div class="a" style="left:1037px;top:339.0px;width:175.8px;height:19.8px;background:#f7f7f9;border:1px solid #e0e2e7;border-radius:2.5px;box-shadow:0 0.5px 1.5px rgba(0,0,0,0.07)"></div>
<svg style="left:1050.1000000000001px;top:342.79999999999995px;" width="12.6" height="12.2" viewBox="0 0 12.6 12.2"><g fill="none" stroke="#8c9198" stroke-width="0.85"><ellipse cx="6.3" cy="3.0999999999999996" rx="1.5" ry="3.0"/><ellipse cx="6.3" cy="9.1" rx="1.5" ry="3.0"/><ellipse cx="3.1999999999999997" cy="6.1" rx="3.0" ry="1.5"/><ellipse cx="9.4" cy="6.1" rx="3.0" ry="1.5"/></g><circle cx="6.3" cy="6.1" r="0.7" fill="#8c9198"/></svg>
<div class="t" style="left:1068.9px;top:344.00px;font-size:10.8px;height:10.8px;color:#466389;letter-spacing:-0.455px;-webkit-text-stroke:0.15px #466389;">Year</div>
<div class="a" style="left:1037px;top:364.3px;width:175.8px;height:19.8px;background:#f7f7f9;border:1px solid #e0e2e7;border-radius:2.5px;box-shadow:0 0.5px 1.5px rgba(0,0,0,0.07)"></div>
<svg style="left:1050.1000000000001px;top:368.13999999999993px;" width="12.6" height="12.2" viewBox="0 0 12.6 12.2"><g fill="none" stroke="#8c9198" stroke-width="0.85"><ellipse cx="6.3" cy="3.0999999999999996" rx="1.5" ry="3.0"/><ellipse cx="6.3" cy="9.1" rx="1.5" ry="3.0"/><ellipse cx="3.1999999999999997" cy="6.1" rx="3.0" ry="1.5"/><ellipse cx="9.4" cy="6.1" rx="3.0" ry="1.5"/></g><circle cx="6.3" cy="6.1" r="0.7" fill="#8c9198"/></svg>
<div class="t" style="left:1068.9px;top:369.34px;font-size:10.8px;height:10.8px;color:#466389;letter-spacing:-0.230px;-webkit-text-stroke:0.15px #466389;">Quarter</div>
<div class="a" style="left:1037px;top:389.7px;width:175.8px;height:19.8px;background:#f7f7f9;border:1px solid #e0e2e7;border-radius:2.5px;box-shadow:0 0.5px 1.5px rgba(0,0,0,0.07)"></div>
<svg style="left:1050.1000000000001px;top:393.47999999999996px;" width="12.6" height="12.2" viewBox="0 0 12.6 12.2"><g fill="none" stroke="#8c9198" stroke-width="0.85"><ellipse cx="6.3" cy="3.0999999999999996" rx="1.5" ry="3.0"/><ellipse cx="6.3" cy="9.1" rx="1.5" ry="3.0"/><ellipse cx="3.1999999999999997" cy="6.1" rx="3.0" ry="1.5"/><ellipse cx="9.4" cy="6.1" rx="3.0" ry="1.5"/></g><circle cx="6.3" cy="6.1" r="0.7" fill="#8c9198"/></svg>
<div class="t" style="left:1068.9px;top:394.68px;font-size:10.8px;height:10.8px;color:#466389;letter-spacing:-0.103px;-webkit-text-stroke:0.15px #466389;">Month</div>
<div class="a" style="left:1037px;top:415.0px;width:175.8px;height:19.8px;background:#f7f7f9;border:1px solid #e0e2e7;border-radius:2.5px;box-shadow:0 0.5px 1.5px rgba(0,0,0,0.07)"></div>
<svg style="left:1050.1000000000001px;top:418.81999999999994px;" width="12.6" height="12.2" viewBox="0 0 12.6 12.2"><g fill="none" stroke="#8c9198" stroke-width="0.85"><ellipse cx="6.3" cy="3.0999999999999996" rx="1.5" ry="3.0"/><ellipse cx="6.3" cy="9.1" rx="1.5" ry="3.0"/><ellipse cx="3.1999999999999997" cy="6.1" rx="3.0" ry="1.5"/><ellipse cx="9.4" cy="6.1" rx="3.0" ry="1.5"/></g><circle cx="6.3" cy="6.1" r="0.7" fill="#8c9198"/></svg>
<div class="t" style="left:1068.9px;top:420.02px;font-size:10.8px;height:10.8px;color:#466389;letter-spacing:-0.182px;-webkit-text-stroke:0.15px #466389;">Month Name</div>
<div class="a" style="left:1037px;top:440.4px;width:175.8px;height:19.8px;background:#f7f7f9;border:1px solid #e0e2e7;border-radius:2.5px;box-shadow:0 0.5px 1.5px rgba(0,0,0,0.07)"></div>
<svg style="left:1050.1000000000001px;top:444.15999999999997px;" width="12.6" height="12.2" viewBox="0 0 12.6 12.2"><g fill="none" stroke="#8c9198" stroke-width="0.85"><ellipse cx="6.3" cy="3.0999999999999996" rx="1.5" ry="3.0"/><ellipse cx="6.3" cy="9.1" rx="1.5" ry="3.0"/><ellipse cx="3.1999999999999997" cy="6.1" rx="3.0" ry="1.5"/><ellipse cx="9.4" cy="6.1" rx="3.0" ry="1.5"/></g><circle cx="6.3" cy="6.1" r="0.7" fill="#8c9198"/></svg>
<div class="t" style="left:1068.9px;top:445.36px;font-size:10.8px;height:10.8px;color:#466389;letter-spacing:-0.243px;-webkit-text-stroke:0.15px #466389;">State</div>
<div class="a" style="left:1037px;top:465.7px;width:175.8px;height:19.8px;background:#f7f7f9;border:1px solid #e0e2e7;border-radius:2.5px;box-shadow:0 0.5px 1.5px rgba(0,0,0,0.07)"></div>
<svg style="left:1050.1000000000001px;top:469.49999999999994px;" width="12.6" height="12.2" viewBox="0 0 12.6 12.2"><g fill="none" stroke="#8c9198" stroke-width="0.85"><ellipse cx="6.3" cy="3.0999999999999996" rx="1.5" ry="3.0"/><ellipse cx="6.3" cy="9.1" rx="1.5" ry="3.0"/><ellipse cx="3.1999999999999997" cy="6.1" rx="3.0" ry="1.5"/><ellipse cx="9.4" cy="6.1" rx="3.0" ry="1.5"/></g><circle cx="6.3" cy="6.1" r="0.7" fill="#8c9198"/></svg>
<div class="t" style="left:1068.9px;top:470.70px;font-size:10.8px;height:10.8px;color:#466389;letter-spacing:-0.150px;-webkit-text-stroke:0.15px #466389;">City</div>
<div class="a" style="left:1037px;top:491.0px;width:175.8px;height:19.8px;background:#f7f7f9;border:1px solid #e0e2e7;border-radius:2.5px;box-shadow:0 0.5px 1.5px rgba(0,0,0,0.07)"></div>
<svg style="left:1050.1000000000001px;top:494.8399999999999px;" width="12.6" height="12.2" viewBox="0 0 12.6 12.2"><g fill="none" stroke="#8c9198" stroke-width="0.85"><ellipse cx="6.3" cy="3.0999999999999996" rx="1.5" ry="3.0"/><ellipse cx="6.3" cy="9.1" rx="1.5" ry="3.0"/><ellipse cx="3.1999999999999997" cy="6.1" rx="3.0" ry="1.5"/><ellipse cx="9.4" cy="6.1" rx="3.0" ry="1.5"/></g><circle cx="6.3" cy="6.1" r="0.7" fill="#8c9198"/></svg>
<div class="t" style="left:1068.9px;top:496.04px;font-size:10.8px;height:10.8px;color:#466389;letter-spacing:-0.262px;-webkit-text-stroke:0.15px #466389;">Store Name</div>
<div class="a" style="left:1037px;top:516.4px;width:175.8px;height:19.8px;background:#f7f7f9;border:1px solid #e0e2e7;border-radius:2.5px;box-shadow:0 0.5px 1.5px rgba(0,0,0,0.07)"></div>
<svg style="left:1050.1000000000001px;top:520.18px;" width="12.6" height="12.2" viewBox="0 0 12.6 12.2"><g fill="none" stroke="#8c9198" stroke-width="0.85"><ellipse cx="6.3" cy="3.0999999999999996" rx="1.5" ry="3.0"/><ellipse cx="6.3" cy="9.1" rx="1.5" ry="3.0"/><ellipse cx="3.1999999999999997" cy="6.1" rx="3.0" ry="1.5"/><ellipse cx="9.4" cy="6.1" rx="3.0" ry="1.5"/></g><circle cx="6.3" cy="6.1" r="0.7" fill="#8c9198"/></svg>
<div class="t" style="left:1068.9px;top:521.38px;font-size:10.8px;height:10.8px;color:#466389;letter-spacing:-0.290px;-webkit-text-stroke:0.15px #466389;">Zip Code</div>
<div class="a" style="left:1037px;top:541.7px;width:175.8px;height:19.8px;background:#f7f7f9;border:1px solid #e0e2e7;border-radius:2.5px;box-shadow:0 0.5px 1.5px rgba(0,0,0,0.07)"></div>
<svg style="left:1050.1000000000001px;top:545.52px;" width="12.6" height="12.2" viewBox="0 0 12.6 12.2"><g fill="none" stroke="#8c9198" stroke-width="0.85"><ellipse cx="6.3" cy="3.0999999999999996" rx="1.5" ry="3.0"/><ellipse cx="6.3" cy="9.1" rx="1.5" ry="3.0"/><ellipse cx="3.1999999999999997" cy="6.1" rx="3.0" ry="1.5"/><ellipse cx="9.4" cy="6.1" rx="3.0" ry="1.5"/></g><circle cx="6.3" cy="6.1" r="0.7" fill="#8c9198"/></svg>
<div class="t" style="left:1068.9px;top:546.72px;font-size:10.8px;height:10.8px;color:#466389;letter-spacing:-0.302px;-webkit-text-stroke:0.15px #466389;">Address</div>
<div class="a" style="left:1037px;top:567.1px;width:175.8px;height:19.8px;background:#f7f7f9;border:1px solid #e0e2e7;border-radius:2.5px;box-shadow:0 0.5px 1.5px rgba(0,0,0,0.07)"></div>
<svg style="left:1050.1000000000001px;top:570.86px;" width="12.6" height="12.2" viewBox="0 0 12.6 12.2"><g fill="none" stroke="#8c9198" stroke-width="0.85"><ellipse cx="6.3" cy="3.0999999999999996" rx="1.5" ry="3.0"/><ellipse cx="6.3" cy="9.1" rx="1.5" ry="3.0"/><ellipse cx="3.1999999999999997" cy="6.1" rx="3.0" ry="1.5"/><ellipse cx="9.4" cy="6.1" rx="3.0" ry="1.5"/></g><circle cx="6.3" cy="6.1" r="0.7" fill="#8c9198"/></svg>
<div class="t" style="left:1068.9px;top:572.06px;font-size:10.8px;height:10.8px;color:#466389;letter-spacing:-0.229px;-webkit-text-stroke:0.15px #466389;">Name of manager</div>
<div class="a" style="left:1037px;top:592.4px;width:175.8px;height:19.8px;background:#f7f7f9;border:1px solid #e0e2e7;border-radius:2.5px;box-shadow:0 0.5px 1.5px rgba(0,0,0,0.07)"></div>
<svg style="left:1050.1000000000001px;top:596.1999999999999px;" width="12.6" height="12.2" viewBox="0 0 12.6 12.2"><g fill="none" stroke="#8c9198" stroke-width="0.85"><ellipse cx="6.3" cy="3.0999999999999996" rx="1.5" ry="3.0"/><ellipse cx="6.3" cy="9.1" rx="1.5" ry="3.0"/><ellipse cx="3.1999999999999997" cy="6.1" rx="3.0" ry="1.5"/><ellipse cx="9.4" cy="6.1" rx="3.0" ry="1.5"/></g><circle cx="6.3" cy="6.1" r="0.7" fill="#8c9198"/></svg>
<div class="t" style="left:1068.9px;top:597.40px;font-size:10.8px;height:10.8px;color:#466389;letter-spacing:-0.243px;-webkit-text-stroke:0.15px #466389;">Owned</div>
<div class="a" style="left:1037px;top:617.7px;width:175.8px;height:19.8px;background:#f7f7f9;border:1px solid #e0e2e7;border-radius:2.5px;box-shadow:0 0.5px 1.5px rgba(0,0,0,0.07)"></div>
<svg style="left:1050.1000000000001px;top:621.54px;" width="12.6" height="12.2" viewBox="0 0 12.6 12.2"><g fill="none" stroke="#8c9198" stroke-width="0.85"><ellipse cx="6.3" cy="3.0999999999999996" rx="1.5" ry="3.0"/><ellipse cx="6.3" cy="9.1" rx="1.5" ry="3.0"/><ellipse cx="3.1999999999999997" cy="6.1" rx="3.0" ry="1.5"/><ellipse cx="9.4" cy="6.1" rx="3.0" ry="1.5"/></g><circle cx="6.3" cy="6.1" r="0.7" fill="#8c9198"/></svg>
<div class="t" style="left:1068.9px;top:622.74px;font-size:10.8px;height:10.8px;color:#466389;letter-spacing:-0.263px;-webkit-text-stroke:0.15px #466389;">Lines</div>
<div class="a" style="left:1037px;top:643.1px;width:175.8px;height:19.8px;background:#f7f7f9;border:1px solid #e0e2e7;border-radius:2.5px;box-shadow:0 0.5px 1.5px rgba(0,0,0,0.07)"></div>
<svg style="left:1050.1000000000001px;top:646.88px;" width="12.6" height="12.2" viewBox="0 0 12.6 12.2"><g fill="none" stroke="#8c9198" stroke-width="0.85"><ellipse cx="6.3" cy="3.0999999999999996" rx="1.5" ry="3.0"/><ellipse cx="6.3" cy="9.1" rx="1.5" ry="3.0"/><ellipse cx="3.1999999999999997" cy="6.1" rx="3.0" ry="1.5"/><ellipse cx="9.4" cy="6.1" rx="3.0" ry="1.5"/></g><circle cx="6.3" cy="6.1" r="0.7" fill="#8c9198"/></svg>
<div class="t" style="left:1068.9px;top:648.08px;font-size:10.8px;height:10.8px;color:#466389;letter-spacing:-0.165px;-webkit-text-stroke:0.15px #466389;">Category</div>
<div class="a" style="left:1037px;top:668.4px;width:175.8px;height:19.8px;background:#f7f7f9;border:1px solid #e0e2e7;border-radius:2.5px;box-shadow:0 0.5px 1.5px rgba(0,0,0,0.07)"></div>
<svg style="left:1050.6px;top:673.3199999999999px;" width="12" height="10" viewBox="0 0 12 10"><rect x="0" y="0.2" width="12" height="2.6" rx="0.6" fill="#f2b463"/><rect x="0" y="3.9" width="12" height="2" fill="#f9dcb0"/><rect x="0" y="7" width="12" height="2.6" rx="0.6" fill="#f2b463"/><path d="M1 4.9 H11" stroke="#fff" stroke-width="0.6" stroke-dasharray="1.4 0.8"/></svg>
<div class="t" style="left:1068.9px;top:673.42px;font-size:10.8px;height:10.8px;color:#466389;letter-spacing:-0.272px;-webkit-text-stroke:0.15px #466389;">Sales revenue</div>
<div class="a" style="left:1037px;top:693.8px;width:175.8px;height:19.8px;background:#f7f7f9;border:1px solid #e0e2e7;border-radius:2.5px;box-shadow:0 0.5px 1.5px rgba(0,0,0,0.07)"></div>
<svg style="left:1050.6px;top:698.66px;" width="12" height="10" viewBox="0 0 12 10"><rect x="0" y="0.2" width="12" height="2.6" rx="0.6" fill="#f2b463"/><rect x="0" y="3.9" width="12" height="2" fill="#f9dcb0"/><rect x="0" y="7" width="12" height="2.6" rx="0.6" fill="#f2b463"/><path d="M1 4.9 H11" stroke="#fff" stroke-width="0.6" stroke-dasharray="1.4 0.8"/></svg>
<div class="t" style="left:1068.9px;top:698.76px;font-size:10.8px;height:10.8px;color:#466389;letter-spacing:-0.118px;-webkit-text-stroke:0.15px #466389;">Quantity sold</div>
<div class="a" style="left:1037px;top:719.1px;width:175.8px;height:19.8px;background:#f7f7f9;border:1px solid #e0e2e7;border-radius:2.5px;box-shadow:0 0.5px 1.5px rgba(0,0,0,0.07)"></div>
<svg style="left:1050.6px;top:724.0px;" width="12" height="10" viewBox="0 0 12 10"><rect x="0" y="0.2" width="12" height="2.6" rx="0.6" fill="#f2b463"/><rect x="0" y="3.9" width="12" height="2" fill="#f9dcb0"/><rect x="0" y="7" width="12" height="2.6" rx="0.6" fill="#f2b463"/><path d="M1 4.9 H11" stroke="#fff" stroke-width="0.6" stroke-dasharray="1.4 0.8"/></svg>
<div class="t" style="left:1068.9px;top:724.10px;font-size:10.8px;height:10.8px;color:#466389;letter-spacing:-0.252px;-webkit-text-stroke:0.15px #466389;">Margin</div>
<div class="a" style="left:1037px;top:744.4px;width:175.8px;height:19.8px;background:#f7f7f9;border:1px solid #e0e2e7;border-radius:2.5px;box-shadow:0 0.5px 1.5px rgba(0,0,0,0.07)"></div>
<svg style="left:1050.6px;top:749.3399999999999px;" width="12" height="10" viewBox="0 0 12 10"><rect x="0" y="0.2" width="12" height="2.6" rx="0.6" fill="#f2b463"/><rect x="0" y="3.9" width="12" height="2" fill="#f9dcb0"/><rect x="0" y="7" width="12" height="2.6" rx="0.6" fill="#f2b463"/><path d="M1 4.9 H11" stroke="#fff" stroke-width="0.6" stroke-dasharray="1.4 0.8"/></svg>
<div class="t" style="left:1068.9px;top:749.44px;font-size:10.8px;height:10.8px;color:#466389;letter-spacing:-0.190px;-webkit-text-stroke:0.15px #466389;">Discount</div>
<div class="a" style="left:1232.3px;top:83px;width:197.7px;height:29px;background:#4583c4;"></div>
<svg style="left:1243px;top:91.5px;" width="12" height="13" viewBox="0 0 12 13"><path d="M2.3 3 V5.4 Q2.3 7.2 4.2 7.2 H5.4 M6.8 8.4 V9 Q6.8 10.6 8.4 10.6" fill="none" stroke="#fff" stroke-width="1"/><rect x="0.7" y="0.8" width="3.2" height="3.3" rx="0.7" fill="#fff"/><rect x="5.3" y="5.8" width="3" height="2.8" rx="0.9" fill="#4583c4" stroke="#fff" stroke-width="1"/><rect x="8.5" y="9" width="3.1" height="3" rx="0.9" fill="#4583c4" stroke="#fff" stroke-width="1"/></svg>
<div class="t" style="left:1261.9px;top:93.15px;font-size:10.3px;height:10.3px;color:#fff;letter-spacing:0.037px;-webkit-text-stroke:0.3px #fff;">Document structure and filters</div>
<svg style="left:1416px;top:95px;" width="6" height="6" viewBox="0 0 6 6"><path d="M0.4 0.4 H5.6 M0.6 2.2 H5.4 L3 5.4 Z" fill="#fff" stroke="#fff" stroke-width="0.7"/></svg>
<div class="a" style="left:1248px;top:124px;width:164.6px;height:19px;background:#fff;border:1px solid #9ea4ab"></div>
<div class="t" style="left:1254.3px;top:128.25px;font-size:10.5px;height:10.5px;color:#6a7076;letter-spacing:-0.378px;font-style:italic;">Search</div>
<svg style="left:1393.5px;top:128px;" width="11" height="11" viewBox="0 0 11 11"><circle cx="4.4" cy="4.4" r="3.6" fill="none" stroke="#3f6da3" stroke-width="1.05"/><path d="M7 7.2 L10.2 10.4" stroke="#3f6da3" stroke-width="1.3" stroke-linecap="round"/></svg>
<svg style="left:1251.1000000000001px;top:162.95px;" width="8.2" height="4.1" viewBox="0 0 8.2 4.1"><path d="M0 0 L4.1 4.1 L8.2 0" fill="none" stroke="#34608f" stroke-width="1.45" stroke-linecap="round" stroke-linejoin="round"/></svg>
<div class="t" style="left:1267.3px;top:159.00px;font-size:13px;height:13px;color:#3a3f45;letter-spacing:0.018px;">Report 1</div>
<svg style="left:1275px;top:182px;" width="11" height="11" viewBox="0 0 11 11"><rect x="0.6" y="0.6" width="9.8" height="9.4" rx="0.6" fill="#fff" stroke="#96999e" stroke-width="0.9"/><path d="M0.6 1.4 H10.4" stroke="#96999e" stroke-width="0.7"/></svg>
<div class="t" style="left:1295.4px;top:183.35px;font-size:10.5px;height:10.5px;color:#32363a;letter-spacing:-0.239px;-webkit-text-stroke:0.2px #32363a;">Pager Header</div>
<svg style="left:1274.6px;top:206px;" width="11" height="11" viewBox="0 0 11 11"><rect x="0.6" y="0.5" width="9.8" height="3" rx="0.6" fill="none" stroke="#96999e" stroke-width="0.9"/><rect x="0.6" y="5.4" width="2.6" height="2" fill="none" stroke="#96999e" stroke-width="0.8"/><rect x="0.6" y="8.4" width="2.6" height="2" fill="none" stroke="#96999e" stroke-width="0.8"/><path d="M4.8 6.2 H10.4 M4.8 9.4 H10.4" stroke="#96999e" stroke-width="0.9"/></svg>
<div class="t" style="left:1294.5px;top:207.05px;font-size:10.5px;height:10.5px;color:#32363a;letter-spacing:-0.127px;-webkit-text-stroke:0.2px #32363a;">=ReportName()</div>
<div class="a" style="left:1232.4px;top:223.8px;width:197.6px;height:25.6px;background:#ebf0f8;"></div>
<svg style="left:1274.6px;top:229.4px;" width="11.4" height="12" viewBox="0 0 11.4 12"><rect x="0.6" y="1.4" width="10.200000000000001" height="10" rx="1.2" fill="none" stroke="#96999e" stroke-width="1"/><path d="M0.6 4.4 H10.8 M0.6 7.2 H10.8 M3.9 1.4 V11.4 M7.1 1.4 V11.4 M3.9 0.3 V1.4 M7.1 0.3 V1.4 M1.6 0.3 V1.4 M9.4 0.3 V1.4" stroke="#96999e" stroke-width="0.9" fill="none"/></svg>
<div class="t" style="left:1294.5px;top:231.05px;font-size:10.5px;height:10.5px;color:#32363a;letter-spacing:-0.051px;-webkit-text-stroke:0.2px #32363a;">Table 1</div>
<svg style="left:1275px;top:253.6px;" width="11" height="11" viewBox="0 0 11 11"><rect x="0.6" y="0.6" width="9.8" height="9.4" rx="0.6" fill="#fff" stroke="#96999e" stroke-width="0.9"/><path d="M0.6 9.2 H10.4" stroke="#96999e" stroke-width="0.7"/></svg>
<div class="t" style="left:1295.4px;top:254.95px;font-size:10.5px;height:10.5px;color:#32363a;letter-spacing:-0.190px;-webkit-text-stroke:0.2px #32363a;">Pager Footer</div>
<div class="a" style="left:1232.4px;top:289.3px;width:197.6px;height:29.4px;background:#4583c4;"></div>
<svg style="left:1245px;top:297.5px;" width="12" height="13" viewBox="0 0 12 13"><path d="M6 0.8 L10.8 3.5 V9.1 L6 11.8 L1.2 9.1 V3.5 Z" fill="#fff"/><path d="M6 4 L8.4 5.3 V8 L6 9.3 L3.6 8 V5.3 Z" fill="#4583c4"/><path d="M6 6.6 V11.5 M6 6.6 L1.4 3.8 M6 6.6 L10.6 3.8" stroke="#4583c4" stroke-width="0.8"/></svg>
<div class="t" style="left:1261.9px;top:298.85px;font-size:10.3px;height:10.3px;color:#fff;letter-spacing:0.031px;-webkit-text-stroke:0.3px #fff;">Object List</div>
<svg style="left:1416px;top:301.5px;" width="6" height="5" viewBox="0 0 6 5"><path d="M3 0.4 L5.6 4.4 H0.4 Z" fill="#fff"/></svg>
<div class="a" style="left:1248px;top:330.2px;width:164.6px;height:19px;background:#fff;border:1px solid #9ea4ab"></div>
<div class="t" style="left:1254.3px;top:334.45px;font-size:10.5px;height:10.5px;color:#6a7076;letter-spacing:-0.378px;font-style:italic;">Search</div>
<svg style="left:1393.5px;top:334.2px;" width="11" height="11" viewBox="0 0 11 11"><circle cx="4.4" cy="4.4" r="3.6" fill="none" stroke="#3f6da3" stroke-width="1.05"/><path d="M7 7.2 L10.2 10.4" stroke="#3f6da3" stroke-width="1.3" stroke-linecap="round"/></svg>
<div class="t" style="left:1258.3px;top:357.95px;font-size:10.5px;height:10.5px;color:#3d6ea6;letter-spacing:-0.089px;">Show Objects by Type</div>
<svg style="left:1399.8px;top:361.59999999999997px;" width="6.4" height="3.2" viewBox="0 0 6.4 3.2"><path d="M0 0 L3.2 3.2 L6.4 0" fill="none" stroke="#7f99b8" stroke-width="1.0" stroke-linecap="round" stroke-linejoin="round"/></svg>
<svg style="left:1255.95px;top:391.2px;" width="4.1" height="8.2" viewBox="0 0 4.1 8.2"><path d="M0 0 L4.1 4.1 L0 8.2" fill="none" stroke="#34608f" stroke-width="1.45" stroke-linecap="round" stroke-linejoin="round"/></svg>
<div class="t" style="left:1271px;top:389.10px;font-size:13px;height:13px;color:#3a3f45;letter-spacing:0.141px;">Variables</div>
<svg style="left:1392.5px;top:390px;" width="11" height="11" viewBox="0 0 11 11"><path d="M5.5 0.3 V10.7 M0.3 5.5 H10.7" stroke="#3f72ab" stroke-width="1.4"/></svg>
<div class="a" style="left:1248px;top:406.8px;width:165.5px;height:1.2px;background:#c3c6cb;"></div>
<svg style="left:1252.9px;top:426.95px;" width="8.2" height="4.1" viewBox="0 0 8.2 4.1"><path d="M0 0 L4.1 4.1 L8.2 0" fill="none" stroke="#34608f" stroke-width="1.45" stroke-linecap="round" stroke-linejoin="round"/></svg>
<div class="t" style="left:1270px;top:422.90px;font-size:13px;height:13px;color:#3a3f45;letter-spacing:-0.009px;">Measures</div>
<svg style="left:1278px;top:445.7px;" width="12" height="10" viewBox="0 0 12 10"><rect x="0" y="0.2" width="12" height="2.6" rx="0.6" fill="#f2b463"/><rect x="0" y="3.9" width="12" height="2" fill="#f9dcb0"/><rect x="0" y="7" width="12" height="2.6" rx="0.6" fill="#f2b463"/><path d="M1 4.9 H11" stroke="#fff" stroke-width="0.6" stroke-dasharray="1.4 0.8"/></svg>
<div class="t" style="left:1297.5px;top:445.65px;font-size:10.5px;height:10.5px;color:#32363a;letter-spacing:-0.044px;-webkit-text-stroke:0.2px #32363a;">Discount</div>
<svg style="left:1278px;top:464.38px;" width="12" height="10" viewBox="0 0 12 10"><rect x="0" y="0.2" width="12" height="2.6" rx="0.6" fill="#f2b463"/><rect x="0" y="3.9" width="12" height="2" fill="#f9dcb0"/><rect x="0" y="7" width="12" height="2.6" rx="0.6" fill="#f2b463"/><path d="M1 4.9 H11" stroke="#fff" stroke-width="0.6" stroke-dasharray="1.4 0.8"/></svg>
<div class="t" style="left:1297.5px;top:464.33px;font-size:10.5px;height:10.5px;color:#32363a;letter-spacing:-0.099px;-webkit-text-stroke:0.2px #32363a;">Margin</div>
<svg style="left:1278px;top:483.06px;" width="12" height="10" viewBox="0 0 12 10"><rect x="0" y="0.2" width="12" height="2.6" rx="0.6" fill="#f2b463"/><rect x="0" y="3.9" width="12" height="2" fill="#f9dcb0"/><rect x="0" y="7" width="12" height="2.6" rx="0.6" fill="#f2b463"/><path d="M1 4.9 H11" stroke="#fff" stroke-width="0.6" stroke-dasharray="1.4 0.8"/></svg>
<div class="t" style="left:1297.5px;top:483.01px;font-size:10.5px;height:10.5px;color:#32363a;letter-spacing:-0.108px;-webkit-text-stroke:0.2px #32363a;">Promotion Cost USD</div>
<svg style="left:1278px;top:501.74px;" width="12" height="10" viewBox="0 0 12 10"><rect x="0" y="0.2" width="12" height="2.6" rx="0.6" fill="#f2b463"/><rect x="0" y="3.9" width="12" height="2" fill="#f9dcb0"/><rect x="0" y="7" width="12" height="2.6" rx="0.6" fill="#f2b463"/><path d="M1 4.9 H11" stroke="#fff" stroke-width="0.6" stroke-dasharray="1.4 0.8"/></svg>
<div class="t" style="left:1297.5px;top:501.69px;font-size:10.5px;height:10.5px;color:#32363a;letter-spacing:-0.041px;-webkit-text-stroke:0.2px #32363a;">Quantity Sold</div>
<svg style="left:1278px;top:520.42px;" width="12" height="10" viewBox="0 0 12 10"><rect x="0" y="0.2" width="12" height="2.6" rx="0.6" fill="#f2b463"/><rect x="0" y="3.9" width="12" height="2" fill="#f9dcb0"/><rect x="0" y="7" width="12" height="2.6" rx="0.6" fill="#f2b463"/><path d="M1 4.9 H11" stroke="#fff" stroke-width="0.6" stroke-dasharray="1.4 0.8"/></svg>
<div class="t" style="left:1297.5px;top:520.37px;font-size:10.5px;height:10.5px;color:#32363a;letter-spacing:-0.208px;-webkit-text-stroke:0.2px #32363a;">Sales Revenue</div>
<div class="a" style="left:1248px;top:549px;width:160px;height:1px;background:#eef0f3;"></div>
<svg style="left:1252.7px;top:563.5500000000001px;" width="8.2" height="4.1" viewBox="0 0 8.2 4.1"><path d="M0 0 L4.1 4.1 L8.2 0" fill="none" stroke="#34608f" stroke-width="1.45" stroke-linecap="round" stroke-linejoin="round"/></svg>
<div class="t" style="left:1270px;top:559.50px;font-size:13px;height:13px;color:#3a3f45;letter-spacing:0.059px;">Dimensions</div>
<svg style="left:1269.5px;top:581.1999999999999px;" width="12.6" height="12.2" viewBox="0 0 12.6 12.2"><g fill="none" stroke="#8c9198" stroke-width="0.85"><ellipse cx="6.3" cy="3.0999999999999996" rx="1.5" ry="3.0"/><ellipse cx="6.3" cy="9.1" rx="1.5" ry="3.0"/><ellipse cx="3.1999999999999997" cy="6.1" rx="3.0" ry="1.5"/><ellipse cx="9.4" cy="6.1" rx="3.0" ry="1.5"/></g><circle cx="6.3" cy="6.1" r="0.7" fill="#8c9198"/></svg>
<div class="t" style="left:1289px;top:582.25px;font-size:10.5px;height:10.5px;color:#32363a;letter-spacing:-0.013px;-webkit-text-stroke:0.2px #32363a;">Category</div>
<svg style="left:1269.5px;top:599.8px;" width="12.6" height="12.2" viewBox="0 0 12.6 12.2"><g fill="none" stroke="#8c9198" stroke-width="0.85"><ellipse cx="6.3" cy="3.0999999999999996" rx="1.5" ry="3.0"/><ellipse cx="6.3" cy="9.1" rx="1.5" ry="3.0"/><ellipse cx="3.1999999999999997" cy="6.1" rx="3.0" ry="1.5"/><ellipse cx="9.4" cy="6.1" rx="3.0" ry="1.5"/></g><circle cx="6.3" cy="6.1" r="0.7" fill="#8c9198"/></svg>
<div class="t" style="left:1289px;top:600.85px;font-size:10.5px;height:10.5px;color:#32363a;letter-spacing:-0.021px;-webkit-text-stroke:0.2px #32363a;">City</div>
<svg style="left:1269.5px;top:618.4px;" width="12.6" height="12.2" viewBox="0 0 12.6 12.2"><g fill="none" stroke="#8c9198" stroke-width="0.85"><ellipse cx="6.3" cy="3.0999999999999996" rx="1.5" ry="3.0"/><ellipse cx="6.3" cy="9.1" rx="1.5" ry="3.0"/><ellipse cx="3.1999999999999997" cy="6.1" rx="3.0" ry="1.5"/><ellipse cx="9.4" cy="6.1" rx="3.0" ry="1.5"/></g><circle cx="6.3" cy="6.1" r="0.7" fill="#8c9198"/></svg>
<div class="t" style="left:1289px;top:619.45px;font-size:10.5px;height:10.5px;color:#32363a;letter-spacing:-0.120px;-webkit-text-stroke:0.2px #32363a;">Lines</div>
<svg style="left:1270.6999999999998px;top:644.9499999999999px;" width="7.8" height="3.9" viewBox="0 0 7.8 3.9"><path d="M0 0 L3.9 3.9 L7.8 0" fill="none" stroke="#4a5f78" stroke-width="1.15" stroke-linecap="round" stroke-linejoin="round"/></svg>
<svg style="left:1286.7px;top:640.4px;" width="12.6" height="12.2" viewBox="0 0 12.6 12.2"><g fill="none" stroke="#8c9198" stroke-width="0.85"><ellipse cx="6.3" cy="3.0999999999999996" rx="1.5" ry="3.0"/><ellipse cx="6.3" cy="9.1" rx="1.5" ry="3.0"/><ellipse cx="3.1999999999999997" cy="6.1" rx="3.0" ry="1.5"/><ellipse cx="9.4" cy="6.1" rx="3.0" ry="1.5"/></g><circle cx="6.3" cy="6.1" r="0.7" fill="#8c9198"/></svg>
<div class="t" style="left:1306.5px;top:641.45px;font-size:10.5px;height:10.5px;color:#32363a;letter-spacing:0.064px;-webkit-text-stroke:0.2px #32363a;">Month</div>
<svg style="left:1297.1000000000001px;top:658.6999999999999px;" width="12.6" height="12.2" viewBox="0 0 12.6 12.2"><g fill="none" stroke="#8c9198" stroke-width="0.85"><ellipse cx="6.3" cy="3.0999999999999996" rx="1.5" ry="3.0"/><ellipse cx="6.3" cy="9.1" rx="1.5" ry="3.0"/><ellipse cx="3.1999999999999997" cy="6.1" rx="3.0" ry="1.5"/><ellipse cx="9.4" cy="6.1" rx="3.0" ry="1.5"/></g><circle cx="6.3" cy="6.1" r="0.7" fill="#8c9198"/></svg>
<div class="t" style="left:1317px;top:659.75px;font-size:10.5px;height:10.5px;color:#32363a;letter-spacing:-0.010px;-webkit-text-stroke:0.2px #32363a;">Month Name</div>
<svg style="left:1297.1000000000001px;top:677.1px;" width="12.6" height="12.2" viewBox="0 0 12.6 12.2"><g fill="none" stroke="#8c9198" stroke-width="0.85"><ellipse cx="6.3" cy="3.0999999999999996" rx="1.5" ry="3.0"/><ellipse cx="6.3" cy="9.1" rx="1.5" ry="3.0"/><ellipse cx="3.1999999999999997" cy="6.1" rx="3.0" ry="1.5"/><ellipse cx="9.4" cy="6.1" rx="3.0" ry="1.5"/></g><circle cx="6.3" cy="6.1" r="0.7" fill="#8c9198"/></svg>
<div class="t" style="left:1317px;top:678.15px;font-size:10.5px;height:10.5px;color:#32363a;letter-spacing:-0.069px;-webkit-text-stroke:0.2px #32363a;">Name of manager</div>
<svg style="left:1269.5px;top:699.4px;" width="12.6" height="12.2" viewBox="0 0 12.6 12.2"><g fill="none" stroke="#8c9198" stroke-width="0.85"><ellipse cx="6.3" cy="3.0999999999999996" rx="1.5" ry="3.0"/><ellipse cx="6.3" cy="9.1" rx="1.5" ry="3.0"/><ellipse cx="3.1999999999999997" cy="6.1" rx="3.0" ry="1.5"/><ellipse cx="9.4" cy="6.1" rx="3.0" ry="1.5"/></g><circle cx="6.3" cy="6.1" r="0.7" fill="#8c9198"/></svg>
<div class="t" style="left:1289px;top:700.45px;font-size:10.5px;height:10.5px;color:#32363a;letter-spacing:-0.017px;-webkit-text-stroke:0.2px #32363a;">Owned (y/n)</div>
<svg style="left:1269.5px;top:718.1999999999999px;" width="12.6" height="12.2" viewBox="0 0 12.6 12.2"><g fill="none" stroke="#8c9198" stroke-width="0.85"><ellipse cx="6.3" cy="3.0999999999999996" rx="1.5" ry="3.0"/><ellipse cx="6.3" cy="9.1" rx="1.5" ry="3.0"/><ellipse cx="3.1999999999999997" cy="6.1" rx="3.0" ry="1.5"/><ellipse cx="9.4" cy="6.1" rx="3.0" ry="1.5"/></g><circle cx="6.3" cy="6.1" r="0.7" fill="#8c9198"/></svg>
<div class="t" style="left:1289px;top:719.25px;font-size:10.5px;height:10.5px;color:#32363a;letter-spacing:0.016px;-webkit-text-stroke:0.2px #32363a;">Promotion (y/n)</div>
<svg style="left:1269.5px;top:736.5px;" width="12.6" height="12.2" viewBox="0 0 12.6 12.2"><g fill="none" stroke="#8c9198" stroke-width="0.85"><ellipse cx="6.3" cy="3.0999999999999996" rx="1.5" ry="3.0"/><ellipse cx="6.3" cy="9.1" rx="1.5" ry="3.0"/><ellipse cx="3.1999999999999997" cy="6.1" rx="3.0" ry="1.5"/><ellipse cx="9.4" cy="6.1" rx="3.0" ry="1.5"/></g><circle cx="6.3" cy="6.1" r="0.7" fill="#8c9198"/></svg>
<div class="t" style="left:1289px;top:737.55px;font-size:10.5px;height:10.5px;color:#32363a;letter-spacing:-0.085px;-webkit-text-stroke:0.2px #32363a;">Quarter</div>
<svg style="left:1269.5px;top:754.9px;" width="12.6" height="12.2" viewBox="0 0 12.6 12.2"><g fill="none" stroke="#8c9198" stroke-width="0.85"><ellipse cx="6.3" cy="3.0999999999999996" rx="1.5" ry="3.0"/><ellipse cx="6.3" cy="9.1" rx="1.5" ry="3.0"/><ellipse cx="3.1999999999999997" cy="6.1" rx="3.0" ry="1.5"/><ellipse cx="9.4" cy="6.1" rx="3.0" ry="1.5"/></g><circle cx="6.3" cy="6.1" r="0.7" fill="#8c9198"/></svg>
<div class="t" style="left:1289px;top:755.95px;font-size:10.5px;height:10.5px;color:#32363a;letter-spacing:-0.103px;-webkit-text-stroke:0.2px #32363a;">State</div>
<div class="a" style="left:1422px;top:372.7px;width:8px;height:111.3px;background:#b3b3b3;"></div>
<div class="a" style="left:996.9px;top:417.6px;width:1.3px;height:1.7px;background:#5f6670;"></div>
<div class="a" style="left:996.9px;top:420.70000000000005px;width:1.3px;height:1.7px;background:#5f6670;"></div>
<div class="a" style="left:996.9px;top:423.8px;width:1.3px;height:1.7px;background:#5f6670;"></div>
<div class="a" style="left:996.9px;top:426.90000000000003px;width:1.3px;height:1.7px;background:#5f6670;"></div>
<div class="a" style="left:1230.6px;top:417.6px;width:1.3px;height:1.7px;background:#5f6670;"></div>
<div class="a" style="left:1230.6px;top:420.70000000000005px;width:1.3px;height:1.7px;background:#5f6670;"></div>
<div class="a" style="left:1230.6px;top:423.8px;width:1.3px;height:1.7px;background:#5f6670;"></div>
<div class="a" style="left:1230.6px;top:426.90000000000003px;width:1.3px;height:1.7px;background:#5f6670;"></div>
<div class="a" style="left:0px;top:761.7px;width:1430px;height:21.3px;background:#b6b4b7;"></div>
<div class="a" style="left:3.6999999999999993px;top:761px;width:18px;height:18px;border-radius:50%;border:1px solid rgba(255,255,255,0.13);background:rgba(255,255,255,0.035)"></div>
<div class="a" style="left:30px;top:761px;width:18px;height:18px;border-radius:50%;border:1px solid rgba(255,255,255,0.13);background:rgba(255,255,255,0.035)"></div>
<div class="a" style="left:56.5px;top:761px;width:18px;height:18px;border-radius:50%;border:1px solid rgba(255,255,255,0.13);background:rgba(255,255,255,0.035)"></div>
<div class="a" style="left:82.8px;top:761px;width:18px;height:18px;border-radius:50%;border:1px solid rgba(255,255,255,0.13);background:rgba(255,255,255,0.035)"></div>
<div class="a" style="left:109px;top:761px;width:18px;height:18px;border-radius:50%;border:1px solid rgba(255,255,255,0.13);background:rgba(255,255,255,0.035)"></div>
<div class="a" style="left:135.5px;top:761px;width:18px;height:18px;border-radius:50%;border:1px solid rgba(255,255,255,0.13);background:rgba(255,255,255,0.035)"></div>
<svg style="left:0px;top:761px;" width="160" height="18" viewBox="0 0 160 18"><path d="M14.5 6 L10.5 9 L14.5 12 Z M37.5 6 L41.5 9 L37.5 12 Z" fill="rgba(255,255,255,0.2)"/><path d="M62 12.6 L69 5.6" stroke="rgba(255,255,255,0.2)" stroke-width="1.4"/><path d="M86.5 4.5 H97 V13.5 H86.5 Z M90 4.5 V13.5 M86.5 7.5 H97" fill="none" stroke="rgba(255,255,255,0.2)" stroke-width="1"/><circle cx="117" cy="7.6" r="3.2" fill="none" stroke="rgba(255,255,255,0.2)" stroke-width="1"/><path d="M119 10 L122 13.4" stroke="rgba(255,255,255,0.2)" stroke-width="1.3"/><circle cx="140.8" cy="9" r="0.9" fill="rgba(255,255,255,0.2)"/><circle cx="144.5" cy="9" r="0.9" fill="rgba(255,255,255,0.2)"/><circle cx="148.2" cy="9" r="0.9" fill="rgba(255,255,255,0.2)"/></svg>
<div class="a" style="left:1266.3px;top:761.3px;width:163.7px;height:21.7px;background:#2e2e32;"></div>
<svg style="left:1271.3px;top:765.3px;" width="13.4" height="13.4" viewBox="0 0 13.4 13.4"><path d="M4 0.8 H9 Q12.4 0.8 12.4 4.2 V8.4 Q12.4 12.4 8.6 12.4 H5.2 Q0.8 12.4 0.8 8 V4 Q0.8 0.8 4 0.8Z" fill="none" stroke="#fff" stroke-width="0.9"/></svg>
<div class="t" style="left:1275.2px;top:767.90px;font-size:8.6px;height:8.6px;color:#fff;font-weight:700">S</div>
<div class="t" style="left:1326.8px;top:767.80px;font-size:7.6px;height:7.6px;color:#fff;letter-spacing:-0.253px;">Skype for Business</div>
</div></body></html>
